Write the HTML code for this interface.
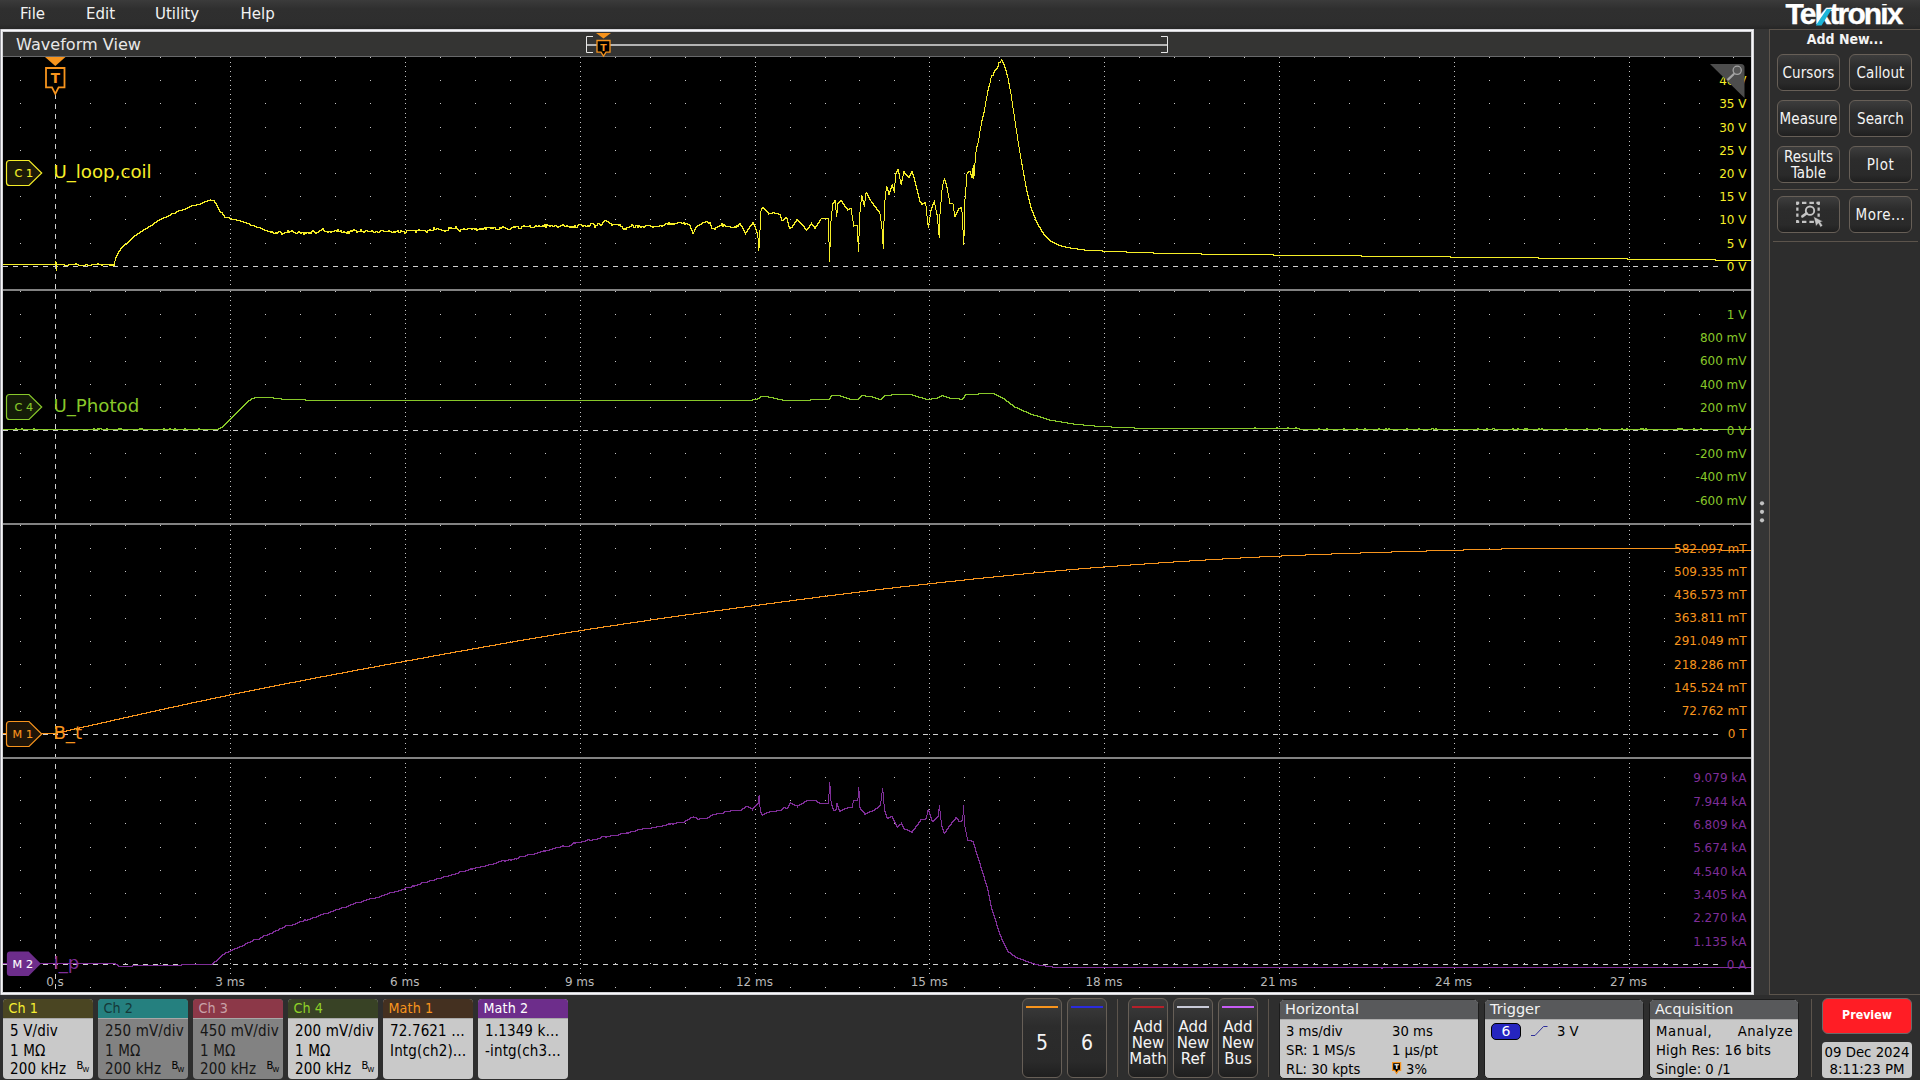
<!DOCTYPE html><html><head><meta charset="utf-8"><title>Waveform View</title><style>
*{box-sizing:border-box;margin:0;padding:0}
html,body{width:1920px;height:1080px;overflow:hidden;background:#2e2e2e;font-family:"DejaVu Sans","Liberation Sans",sans-serif;color:#fff}
#root{position:absolute;left:0;top:0;width:1920px;height:1080px;background:#2e2e2e;overflow:hidden}
.abs{position:absolute}
#menubar{position:absolute;left:0;top:0;width:1920px;height:29px;background:linear-gradient(#3b3b3b 0px,#2f2f2f 9px,#2e2e2e 24px,#262626 29px)}
#menubar span{position:absolute;top:5px;font-size:15px;line-height:18px;color:#f2f2f2;white-space:nowrap}
#frame{position:absolute;left:0;top:29px;width:1754px;height:966px;background:#f7f7f9;box-shadow:inset 0 0 0 1px #d6d6da}
#frame .in{position:absolute;left:3px;top:3px;width:1748px;height:960px;background:#000;box-shadow:0 0 0 1px #d2d2d6}
#frameshade{position:absolute;left:0;top:29px;width:1px;height:966px;background:#9a9aa0}
#wvhead{position:absolute;left:3px;top:32px;width:1748px;height:24px;background:#343433}
#wvhead .t{position:absolute;left:13px;top:3px;font-size:16.1px;line-height:20px;color:#e8e8e8;white-space:nowrap}
#wvline{position:absolute;left:3px;top:56px;width:1748px;height:1px;background:#68696b}
svg{position:absolute;left:0;top:0;overflow:visible}
.lab{position:absolute;right:173.5px;height:15px;line-height:15px;font-size:12px;background:#000;padding:0 0 0 3px;white-space:nowrap;text-align:right}
.tlab{position:absolute;font-size:12px;line-height:13px;color:#b9b9b9;white-space:nowrap;transform:translateX(-50%);top:975.5px;background:#000;padding:0 2px}
.wname{position:absolute;left:53.4px;font-size:18.2px;line-height:22px;white-space:nowrap}
#split{position:absolute;left:1754px;top:29px;width:15px;height:966px;background:#353535}
#side{position:absolute;left:1769px;top:29px;width:152px;height:966px;border:1px solid #5c544c;background:#2d2d2d}
#side .ttl{position:absolute;left:0;top:0px;width:150px;text-align:center;font-family:'DejaVu Sans Condensed','DejaVu Sans',sans-serif;font-weight:bold;font-size:14px;line-height:18px;color:#f4f4f4}
.btn{position:absolute;border:1px solid #675f57;border-radius:6px;background:linear-gradient(#3d3d3d 0%,#2c2c2c 35%,#2a2a2a 80%,#1f1f1f 100%);color:#f4f4f4;text-align:center;font-size:14px;white-space:nowrap}
.sbtn{width:63px;height:37px;line-height:36px;font-family:'DejaVu Sans Condensed','DejaVu Sans',sans-serif;font-size:15px;letter-spacing:0.08px}
.hr{position:absolute;height:1px;background:#5c544c}
.vr{position:absolute;width:1px;background:#5c544c}
.badge{position:absolute;top:999px;width:90px;height:80px;border-radius:4px;overflow:hidden;background:#c9c9c9;color:#000;font-size:14px}
.badge .h{position:absolute;left:0;top:-0.5px;width:100%;height:19.5px;font-family:'DejaVu Sans Condensed','DejaVu Sans',sans-serif;font-size:14.2px;letter-spacing:0.1px;line-height:19px;padding-left:5.5px;white-space:nowrap}
.badge .hl{position:absolute;left:0;top:19px;width:100%;height:1px;background:#a8a8a8}
.badge .r{position:absolute;left:7px;white-space:nowrap;line-height:18px;font-family:'DejaVu Sans Condensed','DejaVu Sans',sans-serif;font-size:15px;letter-spacing:0.15px}
.badge.off{background:#828282;color:#161616}
.bw{position:absolute;left:73.5px;top:61px;font-size:10px;line-height:11px;color:#000}
.bw i{font-style:normal;font-size:6.8px;position:relative;top:3.2px;left:-0.8px}
.ibox{position:absolute;top:999px;height:80px;border:1px solid #1c1c1c;border-radius:5px;overflow:hidden;background:#c9c9c9;color:#000;font-size:14px}
.ibox .h{position:absolute;left:0;top:0;width:100%;height:19px;background:#58595b;color:#f2f2f2;font-size:14.5px;line-height:18px;padding-left:5px;white-space:nowrap}
.ibox .hl{position:absolute;left:0;top:19px;width:100%;height:1px;background:#adadad}
.ibox .r{position:absolute;white-space:nowrap;line-height:18px;font-family:'DejaVu Sans Condensed','DejaVu Sans',sans-serif;font-size:14.7px}
.tbtn{top:998px;width:40px;height:80px;border-radius:6px}
.tbtn .bar{position:absolute;left:3px;top:7px;width:32px;height:2px}
.tbtn .tx{position:absolute;left:-4px;width:46px;top:20px;font-size:15px;line-height:16px;text-align:center}
.tbtn .num{position:absolute;left:0;width:38px;top:31.6px;font-family:'DejaVu Sans Condensed','DejaVu Sans',sans-serif;font-size:21px;line-height:24px;text-align:center}
</style></head><body><div id="root">
<div id="menubar"><span style="left:20px">File</span><span style="left:86px">Edit</span><span style="left:155px">Utility</span><span style="left:240.5px">Help</span></div>
<div id="frame"><div class="in"></div></div><div id="frameshade"></div>
<div id="wvhead"><div class="t">Waveform View</div></div><div id="wvline"></div>
<svg width="1920" height="1080" viewBox="0 0 1920 1080">
<defs><clipPath id="cp"><rect x="3" y="57" width="1748" height="935"/></clipPath></defs>
<g clip-path="url(#cp)">
<path d="M20 57.5h1m69 0h1m34 0h1m34 0h1m34 0h1m34 0h1m34 0h1m34 0h1m34 0h1m34 0h1m34 0h1m34 0h1m34 0h1m34 0h1m34 0h1m34 0h1m34 0h1m34 0h1m34 0h1m34 0h1m34 0h1m34 0h1m34 0h1m33 0h1m34 0h1m34 0h1m34 0h1m34 0h1m34 0h1m34 0h1m34 0h1m34 0h1m34 0h1m34 0h1m34 0h1m34 0h1m34 0h1m34 0h1m34 0h1m34 0h1m34 0h1m34 0h1m34 0h1m34 0h1m34 0h1m34 0h1m34 0h1m34 0h1m33 0h1M20 80.5h1m69 0h1m34 0h1m34 0h1m34 0h1m34 0h1m34 0h1m34 0h1m34 0h1m34 0h1m34 0h1m34 0h1m34 0h1m34 0h1m34 0h1m34 0h1m34 0h1m34 0h1m34 0h1m34 0h1m34 0h1m34 0h1m34 0h1m33 0h1m34 0h1m34 0h1m34 0h1m34 0h1m34 0h1m34 0h1m34 0h1m34 0h1m34 0h1m34 0h1m34 0h1m34 0h1m34 0h1m34 0h1m34 0h1m34 0h1m34 0h1m34 0h1m34 0h1m34 0h1m34 0h1m34 0h1m34 0h1m34 0h1m33 0h1M20 103.5h1m69 0h1m34 0h1m34 0h1m34 0h1m34 0h1m34 0h1m34 0h1m34 0h1m34 0h1m34 0h1m34 0h1m34 0h1m34 0h1m34 0h1m34 0h1m34 0h1m34 0h1m34 0h1m34 0h1m34 0h1m34 0h1m34 0h1m33 0h1m34 0h1m34 0h1m34 0h1m34 0h1m34 0h1m34 0h1m34 0h1m34 0h1m34 0h1m34 0h1m34 0h1m34 0h1m34 0h1m34 0h1m34 0h1m34 0h1m34 0h1m34 0h1m34 0h1m34 0h1m34 0h1m34 0h1m34 0h1m34 0h1m33 0h1M20 127.5h1m69 0h1m34 0h1m34 0h1m34 0h1m34 0h1m34 0h1m34 0h1m34 0h1m34 0h1m34 0h1m34 0h1m34 0h1m34 0h1m34 0h1m34 0h1m34 0h1m34 0h1m34 0h1m34 0h1m34 0h1m34 0h1m34 0h1m33 0h1m34 0h1m34 0h1m34 0h1m34 0h1m34 0h1m34 0h1m34 0h1m34 0h1m34 0h1m34 0h1m34 0h1m34 0h1m34 0h1m34 0h1m34 0h1m34 0h1m34 0h1m34 0h1m34 0h1m34 0h1m34 0h1m34 0h1m34 0h1m34 0h1m33 0h1M20 150.5h1m69 0h1m34 0h1m34 0h1m34 0h1m34 0h1m34 0h1m34 0h1m34 0h1m34 0h1m34 0h1m34 0h1m34 0h1m34 0h1m34 0h1m34 0h1m34 0h1m34 0h1m34 0h1m34 0h1m34 0h1m34 0h1m34 0h1m33 0h1m34 0h1m34 0h1m34 0h1m34 0h1m34 0h1m34 0h1m34 0h1m34 0h1m34 0h1m34 0h1m34 0h1m34 0h1m34 0h1m34 0h1m34 0h1m34 0h1m34 0h1m34 0h1m34 0h1m34 0h1m34 0h1m34 0h1m34 0h1m34 0h1m33 0h1M20 173.5h1m69 0h1m34 0h1m34 0h1m34 0h1m34 0h1m34 0h1m34 0h1m34 0h1m34 0h1m34 0h1m34 0h1m34 0h1m34 0h1m34 0h1m34 0h1m34 0h1m34 0h1m34 0h1m34 0h1m34 0h1m34 0h1m34 0h1m33 0h1m34 0h1m34 0h1m34 0h1m34 0h1m34 0h1m34 0h1m34 0h1m34 0h1m34 0h1m34 0h1m34 0h1m34 0h1m34 0h1m34 0h1m34 0h1m34 0h1m34 0h1m34 0h1m34 0h1m34 0h1m34 0h1m34 0h1m34 0h1m34 0h1m33 0h1M20 196.5h1m69 0h1m34 0h1m34 0h1m34 0h1m34 0h1m34 0h1m34 0h1m34 0h1m34 0h1m34 0h1m34 0h1m34 0h1m34 0h1m34 0h1m34 0h1m34 0h1m34 0h1m34 0h1m34 0h1m34 0h1m34 0h1m34 0h1m33 0h1m34 0h1m34 0h1m34 0h1m34 0h1m34 0h1m34 0h1m34 0h1m34 0h1m34 0h1m34 0h1m34 0h1m34 0h1m34 0h1m34 0h1m34 0h1m34 0h1m34 0h1m34 0h1m34 0h1m34 0h1m34 0h1m34 0h1m34 0h1m34 0h1m33 0h1M20 219.5h1m69 0h1m34 0h1m34 0h1m34 0h1m34 0h1m34 0h1m34 0h1m34 0h1m34 0h1m34 0h1m34 0h1m34 0h1m34 0h1m34 0h1m34 0h1m34 0h1m34 0h1m34 0h1m34 0h1m34 0h1m34 0h1m34 0h1m33 0h1m34 0h1m34 0h1m34 0h1m34 0h1m34 0h1m34 0h1m34 0h1m34 0h1m34 0h1m34 0h1m34 0h1m34 0h1m34 0h1m34 0h1m34 0h1m34 0h1m34 0h1m34 0h1m34 0h1m34 0h1m34 0h1m34 0h1m34 0h1m34 0h1m33 0h1M20 243.5h1m69 0h1m34 0h1m34 0h1m34 0h1m34 0h1m34 0h1m34 0h1m34 0h1m34 0h1m34 0h1m34 0h1m34 0h1m34 0h1m34 0h1m34 0h1m34 0h1m34 0h1m34 0h1m34 0h1m34 0h1m34 0h1m34 0h1m33 0h1m34 0h1m34 0h1m34 0h1m34 0h1m34 0h1m34 0h1m34 0h1m34 0h1m34 0h1m34 0h1m34 0h1m34 0h1m34 0h1m34 0h1m34 0h1m34 0h1m34 0h1m34 0h1m34 0h1m34 0h1m34 0h1m34 0h1m34 0h1m34 0h1m33 0h1M230 57.5h1m-1 5h1m-1 4h1m-1 5h1m-1 5h1m-1 4h1m-1 5h1m-1 4h1m-1 5h1m-1 5h1m-1 4h1m-1 5h1m-1 5h1m-1 4h1m-1 5h1m-1 5h1m-1 4h1m-1 5h1m-1 5h1m-1 4h1m-1 5h1m-1 4h1m-1 5h1m-1 5h1m-1 4h1m-1 5h1m-1 5h1m-1 4h1m-1 5h1m-1 5h1m-1 4h1m-1 5h1m-1 4h1m-1 5h1m-1 5h1m-1 4h1m-1 5h1m-1 5h1m-1 4h1m-1 5h1m-1 5h1m-1 4h1m-1 5h1m-1 5h1m-1 4h1m-1 5h1m-1 4h1m-1 5h1m-1 5h1m-1 4h1M405 57.5h1m-1 5h1m-1 4h1m-1 5h1m-1 5h1m-1 4h1m-1 5h1m-1 4h1m-1 5h1m-1 5h1m-1 4h1m-1 5h1m-1 5h1m-1 4h1m-1 5h1m-1 5h1m-1 4h1m-1 5h1m-1 5h1m-1 4h1m-1 5h1m-1 4h1m-1 5h1m-1 5h1m-1 4h1m-1 5h1m-1 5h1m-1 4h1m-1 5h1m-1 5h1m-1 4h1m-1 5h1m-1 4h1m-1 5h1m-1 5h1m-1 4h1m-1 5h1m-1 5h1m-1 4h1m-1 5h1m-1 5h1m-1 4h1m-1 5h1m-1 5h1m-1 4h1m-1 5h1m-1 4h1m-1 5h1m-1 5h1m-1 4h1M580 57.5h1m-1 5h1m-1 4h1m-1 5h1m-1 5h1m-1 4h1m-1 5h1m-1 4h1m-1 5h1m-1 5h1m-1 4h1m-1 5h1m-1 5h1m-1 4h1m-1 5h1m-1 5h1m-1 4h1m-1 5h1m-1 5h1m-1 4h1m-1 5h1m-1 4h1m-1 5h1m-1 5h1m-1 4h1m-1 5h1m-1 5h1m-1 4h1m-1 5h1m-1 5h1m-1 4h1m-1 5h1m-1 4h1m-1 5h1m-1 5h1m-1 4h1m-1 5h1m-1 5h1m-1 4h1m-1 5h1m-1 5h1m-1 4h1m-1 5h1m-1 5h1m-1 4h1m-1 5h1m-1 4h1m-1 5h1m-1 5h1m-1 4h1M755 57.5h1m-1 5h1m-1 4h1m-1 5h1m-1 5h1m-1 4h1m-1 5h1m-1 4h1m-1 5h1m-1 5h1m-1 4h1m-1 5h1m-1 5h1m-1 4h1m-1 5h1m-1 5h1m-1 4h1m-1 5h1m-1 5h1m-1 4h1m-1 5h1m-1 4h1m-1 5h1m-1 5h1m-1 4h1m-1 5h1m-1 5h1m-1 4h1m-1 5h1m-1 5h1m-1 4h1m-1 5h1m-1 4h1m-1 5h1m-1 5h1m-1 4h1m-1 5h1m-1 5h1m-1 4h1m-1 5h1m-1 5h1m-1 4h1m-1 5h1m-1 5h1m-1 4h1m-1 5h1m-1 4h1m-1 5h1m-1 5h1m-1 4h1M929 57.5h1m-1 5h1m-1 4h1m-1 5h1m-1 5h1m-1 4h1m-1 5h1m-1 4h1m-1 5h1m-1 5h1m-1 4h1m-1 5h1m-1 5h1m-1 4h1m-1 5h1m-1 5h1m-1 4h1m-1 5h1m-1 5h1m-1 4h1m-1 5h1m-1 4h1m-1 5h1m-1 5h1m-1 4h1m-1 5h1m-1 5h1m-1 4h1m-1 5h1m-1 5h1m-1 4h1m-1 5h1m-1 4h1m-1 5h1m-1 5h1m-1 4h1m-1 5h1m-1 5h1m-1 4h1m-1 5h1m-1 5h1m-1 4h1m-1 5h1m-1 5h1m-1 4h1m-1 5h1m-1 4h1m-1 5h1m-1 5h1m-1 4h1M1104 57.5h1m-1 5h1m-1 4h1m-1 5h1m-1 5h1m-1 4h1m-1 5h1m-1 4h1m-1 5h1m-1 5h1m-1 4h1m-1 5h1m-1 5h1m-1 4h1m-1 5h1m-1 5h1m-1 4h1m-1 5h1m-1 5h1m-1 4h1m-1 5h1m-1 4h1m-1 5h1m-1 5h1m-1 4h1m-1 5h1m-1 5h1m-1 4h1m-1 5h1m-1 5h1m-1 4h1m-1 5h1m-1 4h1m-1 5h1m-1 5h1m-1 4h1m-1 5h1m-1 5h1m-1 4h1m-1 5h1m-1 5h1m-1 4h1m-1 5h1m-1 5h1m-1 4h1m-1 5h1m-1 4h1m-1 5h1m-1 5h1m-1 4h1M1279 57.5h1m-1 5h1m-1 4h1m-1 5h1m-1 5h1m-1 4h1m-1 5h1m-1 4h1m-1 5h1m-1 5h1m-1 4h1m-1 5h1m-1 5h1m-1 4h1m-1 5h1m-1 5h1m-1 4h1m-1 5h1m-1 5h1m-1 4h1m-1 5h1m-1 4h1m-1 5h1m-1 5h1m-1 4h1m-1 5h1m-1 5h1m-1 4h1m-1 5h1m-1 5h1m-1 4h1m-1 5h1m-1 4h1m-1 5h1m-1 5h1m-1 4h1m-1 5h1m-1 5h1m-1 4h1m-1 5h1m-1 5h1m-1 4h1m-1 5h1m-1 5h1m-1 4h1m-1 5h1m-1 4h1m-1 5h1m-1 5h1m-1 4h1M1454 57.5h1m-1 5h1m-1 4h1m-1 5h1m-1 5h1m-1 4h1m-1 5h1m-1 4h1m-1 5h1m-1 5h1m-1 4h1m-1 5h1m-1 5h1m-1 4h1m-1 5h1m-1 5h1m-1 4h1m-1 5h1m-1 5h1m-1 4h1m-1 5h1m-1 4h1m-1 5h1m-1 5h1m-1 4h1m-1 5h1m-1 5h1m-1 4h1m-1 5h1m-1 5h1m-1 4h1m-1 5h1m-1 4h1m-1 5h1m-1 5h1m-1 4h1m-1 5h1m-1 5h1m-1 4h1m-1 5h1m-1 5h1m-1 4h1m-1 5h1m-1 5h1m-1 4h1m-1 5h1m-1 4h1m-1 5h1m-1 5h1m-1 4h1M1629 57.5h1m-1 5h1m-1 4h1m-1 5h1m-1 5h1m-1 4h1m-1 5h1m-1 4h1m-1 5h1m-1 5h1m-1 4h1m-1 5h1m-1 5h1m-1 4h1m-1 5h1m-1 5h1m-1 4h1m-1 5h1m-1 5h1m-1 4h1m-1 5h1m-1 4h1m-1 5h1m-1 5h1m-1 4h1m-1 5h1m-1 5h1m-1 4h1m-1 5h1m-1 5h1m-1 4h1m-1 5h1m-1 4h1m-1 5h1m-1 5h1m-1 4h1m-1 5h1m-1 5h1m-1 4h1m-1 5h1m-1 5h1m-1 4h1m-1 5h1m-1 5h1m-1 4h1m-1 5h1m-1 4h1m-1 5h1m-1 5h1m-1 4h1M20 291.5h1m69 0h1m34 0h1m34 0h1m34 0h1m34 0h1m34 0h1m34 0h1m34 0h1m34 0h1m34 0h1m34 0h1m34 0h1m34 0h1m34 0h1m34 0h1m34 0h1m34 0h1m34 0h1m34 0h1m34 0h1m34 0h1m34 0h1m33 0h1m34 0h1m34 0h1m34 0h1m34 0h1m34 0h1m34 0h1m34 0h1m34 0h1m34 0h1m34 0h1m34 0h1m34 0h1m34 0h1m34 0h1m34 0h1m34 0h1m34 0h1m34 0h1m34 0h1m34 0h1m34 0h1m34 0h1m34 0h1m34 0h1m33 0h1M20 314.5h1m69 0h1m34 0h1m34 0h1m34 0h1m34 0h1m34 0h1m34 0h1m34 0h1m34 0h1m34 0h1m34 0h1m34 0h1m34 0h1m34 0h1m34 0h1m34 0h1m34 0h1m34 0h1m34 0h1m34 0h1m34 0h1m34 0h1m33 0h1m34 0h1m34 0h1m34 0h1m34 0h1m34 0h1m34 0h1m34 0h1m34 0h1m34 0h1m34 0h1m34 0h1m34 0h1m34 0h1m34 0h1m34 0h1m34 0h1m34 0h1m34 0h1m34 0h1m34 0h1m34 0h1m34 0h1m34 0h1m34 0h1m33 0h1M20 337.5h1m69 0h1m34 0h1m34 0h1m34 0h1m34 0h1m34 0h1m34 0h1m34 0h1m34 0h1m34 0h1m34 0h1m34 0h1m34 0h1m34 0h1m34 0h1m34 0h1m34 0h1m34 0h1m34 0h1m34 0h1m34 0h1m34 0h1m33 0h1m34 0h1m34 0h1m34 0h1m34 0h1m34 0h1m34 0h1m34 0h1m34 0h1m34 0h1m34 0h1m34 0h1m34 0h1m34 0h1m34 0h1m34 0h1m34 0h1m34 0h1m34 0h1m34 0h1m34 0h1m34 0h1m34 0h1m34 0h1m34 0h1m33 0h1M20 361.5h1m69 0h1m34 0h1m34 0h1m34 0h1m34 0h1m34 0h1m34 0h1m34 0h1m34 0h1m34 0h1m34 0h1m34 0h1m34 0h1m34 0h1m34 0h1m34 0h1m34 0h1m34 0h1m34 0h1m34 0h1m34 0h1m34 0h1m33 0h1m34 0h1m34 0h1m34 0h1m34 0h1m34 0h1m34 0h1m34 0h1m34 0h1m34 0h1m34 0h1m34 0h1m34 0h1m34 0h1m34 0h1m34 0h1m34 0h1m34 0h1m34 0h1m34 0h1m34 0h1m34 0h1m34 0h1m34 0h1m34 0h1m33 0h1M20 384.5h1m69 0h1m34 0h1m34 0h1m34 0h1m34 0h1m34 0h1m34 0h1m34 0h1m34 0h1m34 0h1m34 0h1m34 0h1m34 0h1m34 0h1m34 0h1m34 0h1m34 0h1m34 0h1m34 0h1m34 0h1m34 0h1m34 0h1m33 0h1m34 0h1m34 0h1m34 0h1m34 0h1m34 0h1m34 0h1m34 0h1m34 0h1m34 0h1m34 0h1m34 0h1m34 0h1m34 0h1m34 0h1m34 0h1m34 0h1m34 0h1m34 0h1m34 0h1m34 0h1m34 0h1m34 0h1m34 0h1m34 0h1m33 0h1M20 407.5h1m69 0h1m34 0h1m34 0h1m34 0h1m34 0h1m34 0h1m34 0h1m34 0h1m34 0h1m34 0h1m34 0h1m34 0h1m34 0h1m34 0h1m34 0h1m34 0h1m34 0h1m34 0h1m34 0h1m34 0h1m34 0h1m34 0h1m33 0h1m34 0h1m34 0h1m34 0h1m34 0h1m34 0h1m34 0h1m34 0h1m34 0h1m34 0h1m34 0h1m34 0h1m34 0h1m34 0h1m34 0h1m34 0h1m34 0h1m34 0h1m34 0h1m34 0h1m34 0h1m34 0h1m34 0h1m34 0h1m34 0h1m33 0h1M20 453.5h1m69 0h1m34 0h1m34 0h1m34 0h1m34 0h1m34 0h1m34 0h1m34 0h1m34 0h1m34 0h1m34 0h1m34 0h1m34 0h1m34 0h1m34 0h1m34 0h1m34 0h1m34 0h1m34 0h1m34 0h1m34 0h1m34 0h1m33 0h1m34 0h1m34 0h1m34 0h1m34 0h1m34 0h1m34 0h1m34 0h1m34 0h1m34 0h1m34 0h1m34 0h1m34 0h1m34 0h1m34 0h1m34 0h1m34 0h1m34 0h1m34 0h1m34 0h1m34 0h1m34 0h1m34 0h1m34 0h1m34 0h1m33 0h1M20 477.5h1m69 0h1m34 0h1m34 0h1m34 0h1m34 0h1m34 0h1m34 0h1m34 0h1m34 0h1m34 0h1m34 0h1m34 0h1m34 0h1m34 0h1m34 0h1m34 0h1m34 0h1m34 0h1m34 0h1m34 0h1m34 0h1m34 0h1m33 0h1m34 0h1m34 0h1m34 0h1m34 0h1m34 0h1m34 0h1m34 0h1m34 0h1m34 0h1m34 0h1m34 0h1m34 0h1m34 0h1m34 0h1m34 0h1m34 0h1m34 0h1m34 0h1m34 0h1m34 0h1m34 0h1m34 0h1m34 0h1m34 0h1m33 0h1M20 500.5h1m69 0h1m34 0h1m34 0h1m34 0h1m34 0h1m34 0h1m34 0h1m34 0h1m34 0h1m34 0h1m34 0h1m34 0h1m34 0h1m34 0h1m34 0h1m34 0h1m34 0h1m34 0h1m34 0h1m34 0h1m34 0h1m34 0h1m33 0h1m34 0h1m34 0h1m34 0h1m34 0h1m34 0h1m34 0h1m34 0h1m34 0h1m34 0h1m34 0h1m34 0h1m34 0h1m34 0h1m34 0h1m34 0h1m34 0h1m34 0h1m34 0h1m34 0h1m34 0h1m34 0h1m34 0h1m34 0h1m34 0h1m33 0h1M230 291.5h1m-1 5h1m-1 4h1m-1 5h1m-1 5h1m-1 4h1m-1 5h1m-1 4h1m-1 5h1m-1 5h1m-1 4h1m-1 5h1m-1 5h1m-1 4h1m-1 5h1m-1 5h1m-1 4h1m-1 5h1m-1 5h1m-1 4h1m-1 5h1m-1 4h1m-1 5h1m-1 5h1m-1 4h1m-1 5h1m-1 5h1m-1 4h1m-1 5h1m-1 5h1m-1 4h1m-1 5h1m-1 4h1m-1 5h1m-1 5h1m-1 4h1m-1 5h1m-1 5h1m-1 4h1m-1 5h1m-1 5h1m-1 4h1m-1 5h1m-1 5h1m-1 4h1m-1 5h1m-1 4h1m-1 5h1m-1 5h1m-1 4h1M405 291.5h1m-1 5h1m-1 4h1m-1 5h1m-1 5h1m-1 4h1m-1 5h1m-1 4h1m-1 5h1m-1 5h1m-1 4h1m-1 5h1m-1 5h1m-1 4h1m-1 5h1m-1 5h1m-1 4h1m-1 5h1m-1 5h1m-1 4h1m-1 5h1m-1 4h1m-1 5h1m-1 5h1m-1 4h1m-1 5h1m-1 5h1m-1 4h1m-1 5h1m-1 5h1m-1 4h1m-1 5h1m-1 4h1m-1 5h1m-1 5h1m-1 4h1m-1 5h1m-1 5h1m-1 4h1m-1 5h1m-1 5h1m-1 4h1m-1 5h1m-1 5h1m-1 4h1m-1 5h1m-1 4h1m-1 5h1m-1 5h1m-1 4h1M580 291.5h1m-1 5h1m-1 4h1m-1 5h1m-1 5h1m-1 4h1m-1 5h1m-1 4h1m-1 5h1m-1 5h1m-1 4h1m-1 5h1m-1 5h1m-1 4h1m-1 5h1m-1 5h1m-1 4h1m-1 5h1m-1 5h1m-1 4h1m-1 5h1m-1 4h1m-1 5h1m-1 5h1m-1 4h1m-1 5h1m-1 5h1m-1 4h1m-1 5h1m-1 5h1m-1 4h1m-1 5h1m-1 4h1m-1 5h1m-1 5h1m-1 4h1m-1 5h1m-1 5h1m-1 4h1m-1 5h1m-1 5h1m-1 4h1m-1 5h1m-1 5h1m-1 4h1m-1 5h1m-1 4h1m-1 5h1m-1 5h1m-1 4h1M755 291.5h1m-1 5h1m-1 4h1m-1 5h1m-1 5h1m-1 4h1m-1 5h1m-1 4h1m-1 5h1m-1 5h1m-1 4h1m-1 5h1m-1 5h1m-1 4h1m-1 5h1m-1 5h1m-1 4h1m-1 5h1m-1 5h1m-1 4h1m-1 5h1m-1 4h1m-1 5h1m-1 5h1m-1 4h1m-1 5h1m-1 5h1m-1 4h1m-1 5h1m-1 5h1m-1 4h1m-1 5h1m-1 4h1m-1 5h1m-1 5h1m-1 4h1m-1 5h1m-1 5h1m-1 4h1m-1 5h1m-1 5h1m-1 4h1m-1 5h1m-1 5h1m-1 4h1m-1 5h1m-1 4h1m-1 5h1m-1 5h1m-1 4h1M929 291.5h1m-1 5h1m-1 4h1m-1 5h1m-1 5h1m-1 4h1m-1 5h1m-1 4h1m-1 5h1m-1 5h1m-1 4h1m-1 5h1m-1 5h1m-1 4h1m-1 5h1m-1 5h1m-1 4h1m-1 5h1m-1 5h1m-1 4h1m-1 5h1m-1 4h1m-1 5h1m-1 5h1m-1 4h1m-1 5h1m-1 5h1m-1 4h1m-1 5h1m-1 5h1m-1 4h1m-1 5h1m-1 4h1m-1 5h1m-1 5h1m-1 4h1m-1 5h1m-1 5h1m-1 4h1m-1 5h1m-1 5h1m-1 4h1m-1 5h1m-1 5h1m-1 4h1m-1 5h1m-1 4h1m-1 5h1m-1 5h1m-1 4h1M1104 291.5h1m-1 5h1m-1 4h1m-1 5h1m-1 5h1m-1 4h1m-1 5h1m-1 4h1m-1 5h1m-1 5h1m-1 4h1m-1 5h1m-1 5h1m-1 4h1m-1 5h1m-1 5h1m-1 4h1m-1 5h1m-1 5h1m-1 4h1m-1 5h1m-1 4h1m-1 5h1m-1 5h1m-1 4h1m-1 5h1m-1 5h1m-1 4h1m-1 5h1m-1 5h1m-1 4h1m-1 5h1m-1 4h1m-1 5h1m-1 5h1m-1 4h1m-1 5h1m-1 5h1m-1 4h1m-1 5h1m-1 5h1m-1 4h1m-1 5h1m-1 5h1m-1 4h1m-1 5h1m-1 4h1m-1 5h1m-1 5h1m-1 4h1M1279 291.5h1m-1 5h1m-1 4h1m-1 5h1m-1 5h1m-1 4h1m-1 5h1m-1 4h1m-1 5h1m-1 5h1m-1 4h1m-1 5h1m-1 5h1m-1 4h1m-1 5h1m-1 5h1m-1 4h1m-1 5h1m-1 5h1m-1 4h1m-1 5h1m-1 4h1m-1 5h1m-1 5h1m-1 4h1m-1 5h1m-1 5h1m-1 4h1m-1 5h1m-1 5h1m-1 4h1m-1 5h1m-1 4h1m-1 5h1m-1 5h1m-1 4h1m-1 5h1m-1 5h1m-1 4h1m-1 5h1m-1 5h1m-1 4h1m-1 5h1m-1 5h1m-1 4h1m-1 5h1m-1 4h1m-1 5h1m-1 5h1m-1 4h1M1454 291.5h1m-1 5h1m-1 4h1m-1 5h1m-1 5h1m-1 4h1m-1 5h1m-1 4h1m-1 5h1m-1 5h1m-1 4h1m-1 5h1m-1 5h1m-1 4h1m-1 5h1m-1 5h1m-1 4h1m-1 5h1m-1 5h1m-1 4h1m-1 5h1m-1 4h1m-1 5h1m-1 5h1m-1 4h1m-1 5h1m-1 5h1m-1 4h1m-1 5h1m-1 5h1m-1 4h1m-1 5h1m-1 4h1m-1 5h1m-1 5h1m-1 4h1m-1 5h1m-1 5h1m-1 4h1m-1 5h1m-1 5h1m-1 4h1m-1 5h1m-1 5h1m-1 4h1m-1 5h1m-1 4h1m-1 5h1m-1 5h1m-1 4h1M1629 291.5h1m-1 5h1m-1 4h1m-1 5h1m-1 5h1m-1 4h1m-1 5h1m-1 4h1m-1 5h1m-1 5h1m-1 4h1m-1 5h1m-1 5h1m-1 4h1m-1 5h1m-1 5h1m-1 4h1m-1 5h1m-1 5h1m-1 4h1m-1 5h1m-1 4h1m-1 5h1m-1 5h1m-1 4h1m-1 5h1m-1 5h1m-1 4h1m-1 5h1m-1 5h1m-1 4h1m-1 5h1m-1 4h1m-1 5h1m-1 5h1m-1 4h1m-1 5h1m-1 5h1m-1 4h1m-1 5h1m-1 5h1m-1 4h1m-1 5h1m-1 5h1m-1 4h1m-1 5h1m-1 4h1m-1 5h1m-1 5h1m-1 4h1M20 525.5h1m69 0h1m34 0h1m34 0h1m34 0h1m34 0h1m34 0h1m34 0h1m34 0h1m34 0h1m34 0h1m34 0h1m34 0h1m34 0h1m34 0h1m34 0h1m34 0h1m34 0h1m34 0h1m34 0h1m34 0h1m34 0h1m34 0h1m33 0h1m34 0h1m34 0h1m34 0h1m34 0h1m34 0h1m34 0h1m34 0h1m34 0h1m34 0h1m34 0h1m34 0h1m34 0h1m34 0h1m34 0h1m34 0h1m34 0h1m34 0h1m34 0h1m34 0h1m34 0h1m34 0h1m34 0h1m34 0h1m34 0h1m33 0h1M20 548.5h1m69 0h1m34 0h1m34 0h1m34 0h1m34 0h1m34 0h1m34 0h1m34 0h1m34 0h1m34 0h1m34 0h1m34 0h1m34 0h1m34 0h1m34 0h1m34 0h1m34 0h1m34 0h1m34 0h1m34 0h1m34 0h1m34 0h1m33 0h1m34 0h1m34 0h1m34 0h1m34 0h1m34 0h1m34 0h1m34 0h1m34 0h1m34 0h1m34 0h1m34 0h1m34 0h1m34 0h1m34 0h1m34 0h1m34 0h1m34 0h1m34 0h1m34 0h1m34 0h1m34 0h1m34 0h1m34 0h1m34 0h1m33 0h1M20 571.5h1m69 0h1m34 0h1m34 0h1m34 0h1m34 0h1m34 0h1m34 0h1m34 0h1m34 0h1m34 0h1m34 0h1m34 0h1m34 0h1m34 0h1m34 0h1m34 0h1m34 0h1m34 0h1m34 0h1m34 0h1m34 0h1m34 0h1m33 0h1m34 0h1m34 0h1m34 0h1m34 0h1m34 0h1m34 0h1m34 0h1m34 0h1m34 0h1m34 0h1m34 0h1m34 0h1m34 0h1m34 0h1m34 0h1m34 0h1m34 0h1m34 0h1m34 0h1m34 0h1m34 0h1m34 0h1m34 0h1m34 0h1m33 0h1M20 595.5h1m69 0h1m34 0h1m34 0h1m34 0h1m34 0h1m34 0h1m34 0h1m34 0h1m34 0h1m34 0h1m34 0h1m34 0h1m34 0h1m34 0h1m34 0h1m34 0h1m34 0h1m34 0h1m34 0h1m34 0h1m34 0h1m34 0h1m33 0h1m34 0h1m34 0h1m34 0h1m34 0h1m34 0h1m34 0h1m34 0h1m34 0h1m34 0h1m34 0h1m34 0h1m34 0h1m34 0h1m34 0h1m34 0h1m34 0h1m34 0h1m34 0h1m34 0h1m34 0h1m34 0h1m34 0h1m34 0h1m34 0h1m33 0h1M20 618.5h1m69 0h1m34 0h1m34 0h1m34 0h1m34 0h1m34 0h1m34 0h1m34 0h1m34 0h1m34 0h1m34 0h1m34 0h1m34 0h1m34 0h1m34 0h1m34 0h1m34 0h1m34 0h1m34 0h1m34 0h1m34 0h1m34 0h1m33 0h1m34 0h1m34 0h1m34 0h1m34 0h1m34 0h1m34 0h1m34 0h1m34 0h1m34 0h1m34 0h1m34 0h1m34 0h1m34 0h1m34 0h1m34 0h1m34 0h1m34 0h1m34 0h1m34 0h1m34 0h1m34 0h1m34 0h1m34 0h1m34 0h1m33 0h1M20 641.5h1m69 0h1m34 0h1m34 0h1m34 0h1m34 0h1m34 0h1m34 0h1m34 0h1m34 0h1m34 0h1m34 0h1m34 0h1m34 0h1m34 0h1m34 0h1m34 0h1m34 0h1m34 0h1m34 0h1m34 0h1m34 0h1m34 0h1m33 0h1m34 0h1m34 0h1m34 0h1m34 0h1m34 0h1m34 0h1m34 0h1m34 0h1m34 0h1m34 0h1m34 0h1m34 0h1m34 0h1m34 0h1m34 0h1m34 0h1m34 0h1m34 0h1m34 0h1m34 0h1m34 0h1m34 0h1m34 0h1m34 0h1m33 0h1M20 664.5h1m69 0h1m34 0h1m34 0h1m34 0h1m34 0h1m34 0h1m34 0h1m34 0h1m34 0h1m34 0h1m34 0h1m34 0h1m34 0h1m34 0h1m34 0h1m34 0h1m34 0h1m34 0h1m34 0h1m34 0h1m34 0h1m34 0h1m33 0h1m34 0h1m34 0h1m34 0h1m34 0h1m34 0h1m34 0h1m34 0h1m34 0h1m34 0h1m34 0h1m34 0h1m34 0h1m34 0h1m34 0h1m34 0h1m34 0h1m34 0h1m34 0h1m34 0h1m34 0h1m34 0h1m34 0h1m34 0h1m34 0h1m33 0h1M20 687.5h1m69 0h1m34 0h1m34 0h1m34 0h1m34 0h1m34 0h1m34 0h1m34 0h1m34 0h1m34 0h1m34 0h1m34 0h1m34 0h1m34 0h1m34 0h1m34 0h1m34 0h1m34 0h1m34 0h1m34 0h1m34 0h1m34 0h1m33 0h1m34 0h1m34 0h1m34 0h1m34 0h1m34 0h1m34 0h1m34 0h1m34 0h1m34 0h1m34 0h1m34 0h1m34 0h1m34 0h1m34 0h1m34 0h1m34 0h1m34 0h1m34 0h1m34 0h1m34 0h1m34 0h1m34 0h1m34 0h1m34 0h1m33 0h1M20 711.5h1m69 0h1m34 0h1m34 0h1m34 0h1m34 0h1m34 0h1m34 0h1m34 0h1m34 0h1m34 0h1m34 0h1m34 0h1m34 0h1m34 0h1m34 0h1m34 0h1m34 0h1m34 0h1m34 0h1m34 0h1m34 0h1m34 0h1m33 0h1m34 0h1m34 0h1m34 0h1m34 0h1m34 0h1m34 0h1m34 0h1m34 0h1m34 0h1m34 0h1m34 0h1m34 0h1m34 0h1m34 0h1m34 0h1m34 0h1m34 0h1m34 0h1m34 0h1m34 0h1m34 0h1m34 0h1m34 0h1m34 0h1m33 0h1M230 525.5h1m-1 5h1m-1 4h1m-1 5h1m-1 5h1m-1 4h1m-1 5h1m-1 4h1m-1 5h1m-1 5h1m-1 4h1m-1 5h1m-1 5h1m-1 4h1m-1 5h1m-1 5h1m-1 4h1m-1 5h1m-1 5h1m-1 4h1m-1 5h1m-1 4h1m-1 5h1m-1 5h1m-1 4h1m-1 5h1m-1 5h1m-1 4h1m-1 5h1m-1 5h1m-1 4h1m-1 5h1m-1 4h1m-1 5h1m-1 5h1m-1 4h1m-1 5h1m-1 5h1m-1 4h1m-1 5h1m-1 5h1m-1 4h1m-1 5h1m-1 5h1m-1 4h1m-1 5h1m-1 4h1m-1 5h1m-1 5h1m-1 4h1M405 525.5h1m-1 5h1m-1 4h1m-1 5h1m-1 5h1m-1 4h1m-1 5h1m-1 4h1m-1 5h1m-1 5h1m-1 4h1m-1 5h1m-1 5h1m-1 4h1m-1 5h1m-1 5h1m-1 4h1m-1 5h1m-1 5h1m-1 4h1m-1 5h1m-1 4h1m-1 5h1m-1 5h1m-1 4h1m-1 5h1m-1 5h1m-1 4h1m-1 5h1m-1 5h1m-1 4h1m-1 5h1m-1 4h1m-1 5h1m-1 5h1m-1 4h1m-1 5h1m-1 5h1m-1 4h1m-1 5h1m-1 5h1m-1 4h1m-1 5h1m-1 5h1m-1 4h1m-1 5h1m-1 4h1m-1 5h1m-1 5h1m-1 4h1M580 525.5h1m-1 5h1m-1 4h1m-1 5h1m-1 5h1m-1 4h1m-1 5h1m-1 4h1m-1 5h1m-1 5h1m-1 4h1m-1 5h1m-1 5h1m-1 4h1m-1 5h1m-1 5h1m-1 4h1m-1 5h1m-1 5h1m-1 4h1m-1 5h1m-1 4h1m-1 5h1m-1 5h1m-1 4h1m-1 5h1m-1 5h1m-1 4h1m-1 5h1m-1 5h1m-1 4h1m-1 5h1m-1 4h1m-1 5h1m-1 5h1m-1 4h1m-1 5h1m-1 5h1m-1 4h1m-1 5h1m-1 5h1m-1 4h1m-1 5h1m-1 5h1m-1 4h1m-1 5h1m-1 4h1m-1 5h1m-1 5h1m-1 4h1M755 525.5h1m-1 5h1m-1 4h1m-1 5h1m-1 5h1m-1 4h1m-1 5h1m-1 4h1m-1 5h1m-1 5h1m-1 4h1m-1 5h1m-1 5h1m-1 4h1m-1 5h1m-1 5h1m-1 4h1m-1 5h1m-1 5h1m-1 4h1m-1 5h1m-1 4h1m-1 5h1m-1 5h1m-1 4h1m-1 5h1m-1 5h1m-1 4h1m-1 5h1m-1 5h1m-1 4h1m-1 5h1m-1 4h1m-1 5h1m-1 5h1m-1 4h1m-1 5h1m-1 5h1m-1 4h1m-1 5h1m-1 5h1m-1 4h1m-1 5h1m-1 5h1m-1 4h1m-1 5h1m-1 4h1m-1 5h1m-1 5h1m-1 4h1M929 525.5h1m-1 5h1m-1 4h1m-1 5h1m-1 5h1m-1 4h1m-1 5h1m-1 4h1m-1 5h1m-1 5h1m-1 4h1m-1 5h1m-1 5h1m-1 4h1m-1 5h1m-1 5h1m-1 4h1m-1 5h1m-1 5h1m-1 4h1m-1 5h1m-1 4h1m-1 5h1m-1 5h1m-1 4h1m-1 5h1m-1 5h1m-1 4h1m-1 5h1m-1 5h1m-1 4h1m-1 5h1m-1 4h1m-1 5h1m-1 5h1m-1 4h1m-1 5h1m-1 5h1m-1 4h1m-1 5h1m-1 5h1m-1 4h1m-1 5h1m-1 5h1m-1 4h1m-1 5h1m-1 4h1m-1 5h1m-1 5h1m-1 4h1M1104 525.5h1m-1 5h1m-1 4h1m-1 5h1m-1 5h1m-1 4h1m-1 5h1m-1 4h1m-1 5h1m-1 5h1m-1 4h1m-1 5h1m-1 5h1m-1 4h1m-1 5h1m-1 5h1m-1 4h1m-1 5h1m-1 5h1m-1 4h1m-1 5h1m-1 4h1m-1 5h1m-1 5h1m-1 4h1m-1 5h1m-1 5h1m-1 4h1m-1 5h1m-1 5h1m-1 4h1m-1 5h1m-1 4h1m-1 5h1m-1 5h1m-1 4h1m-1 5h1m-1 5h1m-1 4h1m-1 5h1m-1 5h1m-1 4h1m-1 5h1m-1 5h1m-1 4h1m-1 5h1m-1 4h1m-1 5h1m-1 5h1m-1 4h1M1279 525.5h1m-1 5h1m-1 4h1m-1 5h1m-1 5h1m-1 4h1m-1 5h1m-1 4h1m-1 5h1m-1 5h1m-1 4h1m-1 5h1m-1 5h1m-1 4h1m-1 5h1m-1 5h1m-1 4h1m-1 5h1m-1 5h1m-1 4h1m-1 5h1m-1 4h1m-1 5h1m-1 5h1m-1 4h1m-1 5h1m-1 5h1m-1 4h1m-1 5h1m-1 5h1m-1 4h1m-1 5h1m-1 4h1m-1 5h1m-1 5h1m-1 4h1m-1 5h1m-1 5h1m-1 4h1m-1 5h1m-1 5h1m-1 4h1m-1 5h1m-1 5h1m-1 4h1m-1 5h1m-1 4h1m-1 5h1m-1 5h1m-1 4h1M1454 525.5h1m-1 5h1m-1 4h1m-1 5h1m-1 5h1m-1 4h1m-1 5h1m-1 4h1m-1 5h1m-1 5h1m-1 4h1m-1 5h1m-1 5h1m-1 4h1m-1 5h1m-1 5h1m-1 4h1m-1 5h1m-1 5h1m-1 4h1m-1 5h1m-1 4h1m-1 5h1m-1 5h1m-1 4h1m-1 5h1m-1 5h1m-1 4h1m-1 5h1m-1 5h1m-1 4h1m-1 5h1m-1 4h1m-1 5h1m-1 5h1m-1 4h1m-1 5h1m-1 5h1m-1 4h1m-1 5h1m-1 5h1m-1 4h1m-1 5h1m-1 5h1m-1 4h1m-1 5h1m-1 4h1m-1 5h1m-1 5h1m-1 4h1M1629 525.5h1m-1 5h1m-1 4h1m-1 5h1m-1 5h1m-1 4h1m-1 5h1m-1 4h1m-1 5h1m-1 5h1m-1 4h1m-1 5h1m-1 5h1m-1 4h1m-1 5h1m-1 5h1m-1 4h1m-1 5h1m-1 5h1m-1 4h1m-1 5h1m-1 4h1m-1 5h1m-1 5h1m-1 4h1m-1 5h1m-1 5h1m-1 4h1m-1 5h1m-1 5h1m-1 4h1m-1 5h1m-1 4h1m-1 5h1m-1 5h1m-1 4h1m-1 5h1m-1 5h1m-1 4h1m-1 5h1m-1 5h1m-1 4h1m-1 5h1m-1 5h1m-1 4h1m-1 5h1m-1 4h1m-1 5h1m-1 5h1m-1 4h1M20 777.5h1m69 0h1m34 0h1m34 0h1m34 0h1m34 0h1m34 0h1m34 0h1m34 0h1m34 0h1m34 0h1m34 0h1m34 0h1m34 0h1m34 0h1m34 0h1m34 0h1m34 0h1m34 0h1m34 0h1m34 0h1m34 0h1m34 0h1m33 0h1m34 0h1m34 0h1m34 0h1m34 0h1m34 0h1m34 0h1m34 0h1m34 0h1m34 0h1m34 0h1m34 0h1m34 0h1m34 0h1m34 0h1m34 0h1m34 0h1m34 0h1m34 0h1m34 0h1m34 0h1m34 0h1m34 0h1m34 0h1m34 0h1m33 0h1M20 800.5h1m69 0h1m34 0h1m34 0h1m34 0h1m34 0h1m34 0h1m34 0h1m34 0h1m34 0h1m34 0h1m34 0h1m34 0h1m34 0h1m34 0h1m34 0h1m34 0h1m34 0h1m34 0h1m34 0h1m34 0h1m34 0h1m34 0h1m33 0h1m34 0h1m34 0h1m34 0h1m34 0h1m34 0h1m34 0h1m34 0h1m34 0h1m34 0h1m34 0h1m34 0h1m34 0h1m34 0h1m34 0h1m34 0h1m34 0h1m34 0h1m34 0h1m34 0h1m34 0h1m34 0h1m34 0h1m34 0h1m34 0h1m33 0h1M20 823.5h1m69 0h1m34 0h1m34 0h1m34 0h1m34 0h1m34 0h1m34 0h1m34 0h1m34 0h1m34 0h1m34 0h1m34 0h1m34 0h1m34 0h1m34 0h1m34 0h1m34 0h1m34 0h1m34 0h1m34 0h1m34 0h1m34 0h1m33 0h1m34 0h1m34 0h1m34 0h1m34 0h1m34 0h1m34 0h1m34 0h1m34 0h1m34 0h1m34 0h1m34 0h1m34 0h1m34 0h1m34 0h1m34 0h1m34 0h1m34 0h1m34 0h1m34 0h1m34 0h1m34 0h1m34 0h1m34 0h1m34 0h1m33 0h1M20 847.5h1m69 0h1m34 0h1m34 0h1m34 0h1m34 0h1m34 0h1m34 0h1m34 0h1m34 0h1m34 0h1m34 0h1m34 0h1m34 0h1m34 0h1m34 0h1m34 0h1m34 0h1m34 0h1m34 0h1m34 0h1m34 0h1m34 0h1m33 0h1m34 0h1m34 0h1m34 0h1m34 0h1m34 0h1m34 0h1m34 0h1m34 0h1m34 0h1m34 0h1m34 0h1m34 0h1m34 0h1m34 0h1m34 0h1m34 0h1m34 0h1m34 0h1m34 0h1m34 0h1m34 0h1m34 0h1m34 0h1m34 0h1m33 0h1M20 870.5h1m69 0h1m34 0h1m34 0h1m34 0h1m34 0h1m34 0h1m34 0h1m34 0h1m34 0h1m34 0h1m34 0h1m34 0h1m34 0h1m34 0h1m34 0h1m34 0h1m34 0h1m34 0h1m34 0h1m34 0h1m34 0h1m34 0h1m33 0h1m34 0h1m34 0h1m34 0h1m34 0h1m34 0h1m34 0h1m34 0h1m34 0h1m34 0h1m34 0h1m34 0h1m34 0h1m34 0h1m34 0h1m34 0h1m34 0h1m34 0h1m34 0h1m34 0h1m34 0h1m34 0h1m34 0h1m34 0h1m34 0h1m33 0h1M20 893.5h1m69 0h1m34 0h1m34 0h1m34 0h1m34 0h1m34 0h1m34 0h1m34 0h1m34 0h1m34 0h1m34 0h1m34 0h1m34 0h1m34 0h1m34 0h1m34 0h1m34 0h1m34 0h1m34 0h1m34 0h1m34 0h1m34 0h1m33 0h1m34 0h1m34 0h1m34 0h1m34 0h1m34 0h1m34 0h1m34 0h1m34 0h1m34 0h1m34 0h1m34 0h1m34 0h1m34 0h1m34 0h1m34 0h1m34 0h1m34 0h1m34 0h1m34 0h1m34 0h1m34 0h1m34 0h1m34 0h1m34 0h1m33 0h1M20 917.5h1m69 0h1m34 0h1m34 0h1m34 0h1m34 0h1m34 0h1m34 0h1m34 0h1m34 0h1m34 0h1m34 0h1m34 0h1m34 0h1m34 0h1m34 0h1m34 0h1m34 0h1m34 0h1m34 0h1m34 0h1m34 0h1m34 0h1m33 0h1m34 0h1m34 0h1m34 0h1m34 0h1m34 0h1m34 0h1m34 0h1m34 0h1m34 0h1m34 0h1m34 0h1m34 0h1m34 0h1m34 0h1m34 0h1m34 0h1m34 0h1m34 0h1m34 0h1m34 0h1m34 0h1m34 0h1m34 0h1m34 0h1m33 0h1M20 940.5h1m69 0h1m34 0h1m34 0h1m34 0h1m34 0h1m34 0h1m34 0h1m34 0h1m34 0h1m34 0h1m34 0h1m34 0h1m34 0h1m34 0h1m34 0h1m34 0h1m34 0h1m34 0h1m34 0h1m34 0h1m34 0h1m34 0h1m33 0h1m34 0h1m34 0h1m34 0h1m34 0h1m34 0h1m34 0h1m34 0h1m34 0h1m34 0h1m34 0h1m34 0h1m34 0h1m34 0h1m34 0h1m34 0h1m34 0h1m34 0h1m34 0h1m34 0h1m34 0h1m34 0h1m34 0h1m34 0h1m34 0h1m33 0h1M20 963.5h1m69 0h1m34 0h1m34 0h1m34 0h1m34 0h1m34 0h1m34 0h1m34 0h1m34 0h1m34 0h1m34 0h1m34 0h1m34 0h1m34 0h1m34 0h1m34 0h1m34 0h1m34 0h1m34 0h1m34 0h1m34 0h1m34 0h1m33 0h1m34 0h1m34 0h1m34 0h1m34 0h1m34 0h1m34 0h1m34 0h1m34 0h1m34 0h1m34 0h1m34 0h1m34 0h1m34 0h1m34 0h1m34 0h1m34 0h1m34 0h1m34 0h1m34 0h1m34 0h1m34 0h1m34 0h1m34 0h1m34 0h1m33 0h1M20 987.5h1m69 0h1m34 0h1m34 0h1m34 0h1m34 0h1m34 0h1m34 0h1m34 0h1m34 0h1m34 0h1m34 0h1m34 0h1m34 0h1m34 0h1m34 0h1m34 0h1m34 0h1m34 0h1m34 0h1m34 0h1m34 0h1m34 0h1m33 0h1m34 0h1m34 0h1m34 0h1m34 0h1m34 0h1m34 0h1m34 0h1m34 0h1m34 0h1m34 0h1m34 0h1m34 0h1m34 0h1m34 0h1m34 0h1m34 0h1m34 0h1m34 0h1m34 0h1m34 0h1m34 0h1m34 0h1m34 0h1m34 0h1m33 0h1M230 763.5h1m-1 4h1m-1 5h1m-1 5h1m-1 4h1m-1 5h1m-1 5h1m-1 4h1m-1 5h1m-1 5h1m-1 4h1m-1 5h1m-1 5h1m-1 4h1m-1 5h1m-1 5h1m-1 4h1m-1 5h1m-1 5h1m-1 4h1m-1 5h1m-1 5h1m-1 4h1m-1 5h1m-1 5h1m-1 4h1m-1 5h1m-1 5h1m-1 4h1m-1 5h1m-1 5h1m-1 4h1m-1 5h1m-1 5h1m-1 4h1m-1 5h1m-1 5h1m-1 4h1m-1 5h1m-1 5h1m-1 4h1m-1 5h1m-1 5h1m-1 4h1m-1 5h1m-1 5h1m-1 4h1m-1 5h1m-1 5h1M405 763.5h1m-1 4h1m-1 5h1m-1 5h1m-1 4h1m-1 5h1m-1 5h1m-1 4h1m-1 5h1m-1 5h1m-1 4h1m-1 5h1m-1 5h1m-1 4h1m-1 5h1m-1 5h1m-1 4h1m-1 5h1m-1 5h1m-1 4h1m-1 5h1m-1 5h1m-1 4h1m-1 5h1m-1 5h1m-1 4h1m-1 5h1m-1 5h1m-1 4h1m-1 5h1m-1 5h1m-1 4h1m-1 5h1m-1 5h1m-1 4h1m-1 5h1m-1 5h1m-1 4h1m-1 5h1m-1 5h1m-1 4h1m-1 5h1m-1 5h1m-1 4h1m-1 5h1m-1 5h1m-1 4h1m-1 5h1m-1 5h1M580 763.5h1m-1 4h1m-1 5h1m-1 5h1m-1 4h1m-1 5h1m-1 5h1m-1 4h1m-1 5h1m-1 5h1m-1 4h1m-1 5h1m-1 5h1m-1 4h1m-1 5h1m-1 5h1m-1 4h1m-1 5h1m-1 5h1m-1 4h1m-1 5h1m-1 5h1m-1 4h1m-1 5h1m-1 5h1m-1 4h1m-1 5h1m-1 5h1m-1 4h1m-1 5h1m-1 5h1m-1 4h1m-1 5h1m-1 5h1m-1 4h1m-1 5h1m-1 5h1m-1 4h1m-1 5h1m-1 5h1m-1 4h1m-1 5h1m-1 5h1m-1 4h1m-1 5h1m-1 5h1m-1 4h1m-1 5h1m-1 5h1M755 763.5h1m-1 4h1m-1 5h1m-1 5h1m-1 4h1m-1 5h1m-1 5h1m-1 4h1m-1 5h1m-1 5h1m-1 4h1m-1 5h1m-1 5h1m-1 4h1m-1 5h1m-1 5h1m-1 4h1m-1 5h1m-1 5h1m-1 4h1m-1 5h1m-1 5h1m-1 4h1m-1 5h1m-1 5h1m-1 4h1m-1 5h1m-1 5h1m-1 4h1m-1 5h1m-1 5h1m-1 4h1m-1 5h1m-1 5h1m-1 4h1m-1 5h1m-1 5h1m-1 4h1m-1 5h1m-1 5h1m-1 4h1m-1 5h1m-1 5h1m-1 4h1m-1 5h1m-1 5h1m-1 4h1m-1 5h1m-1 5h1M929 763.5h1m-1 4h1m-1 5h1m-1 5h1m-1 4h1m-1 5h1m-1 5h1m-1 4h1m-1 5h1m-1 5h1m-1 4h1m-1 5h1m-1 5h1m-1 4h1m-1 5h1m-1 5h1m-1 4h1m-1 5h1m-1 5h1m-1 4h1m-1 5h1m-1 5h1m-1 4h1m-1 5h1m-1 5h1m-1 4h1m-1 5h1m-1 5h1m-1 4h1m-1 5h1m-1 5h1m-1 4h1m-1 5h1m-1 5h1m-1 4h1m-1 5h1m-1 5h1m-1 4h1m-1 5h1m-1 5h1m-1 4h1m-1 5h1m-1 5h1m-1 4h1m-1 5h1m-1 5h1m-1 4h1m-1 5h1m-1 5h1M1104 763.5h1m-1 4h1m-1 5h1m-1 5h1m-1 4h1m-1 5h1m-1 5h1m-1 4h1m-1 5h1m-1 5h1m-1 4h1m-1 5h1m-1 5h1m-1 4h1m-1 5h1m-1 5h1m-1 4h1m-1 5h1m-1 5h1m-1 4h1m-1 5h1m-1 5h1m-1 4h1m-1 5h1m-1 5h1m-1 4h1m-1 5h1m-1 5h1m-1 4h1m-1 5h1m-1 5h1m-1 4h1m-1 5h1m-1 5h1m-1 4h1m-1 5h1m-1 5h1m-1 4h1m-1 5h1m-1 5h1m-1 4h1m-1 5h1m-1 5h1m-1 4h1m-1 5h1m-1 5h1m-1 4h1m-1 5h1m-1 5h1M1279 763.5h1m-1 4h1m-1 5h1m-1 5h1m-1 4h1m-1 5h1m-1 5h1m-1 4h1m-1 5h1m-1 5h1m-1 4h1m-1 5h1m-1 5h1m-1 4h1m-1 5h1m-1 5h1m-1 4h1m-1 5h1m-1 5h1m-1 4h1m-1 5h1m-1 5h1m-1 4h1m-1 5h1m-1 5h1m-1 4h1m-1 5h1m-1 5h1m-1 4h1m-1 5h1m-1 5h1m-1 4h1m-1 5h1m-1 5h1m-1 4h1m-1 5h1m-1 5h1m-1 4h1m-1 5h1m-1 5h1m-1 4h1m-1 5h1m-1 5h1m-1 4h1m-1 5h1m-1 5h1m-1 4h1m-1 5h1m-1 5h1M1454 763.5h1m-1 4h1m-1 5h1m-1 5h1m-1 4h1m-1 5h1m-1 5h1m-1 4h1m-1 5h1m-1 5h1m-1 4h1m-1 5h1m-1 5h1m-1 4h1m-1 5h1m-1 5h1m-1 4h1m-1 5h1m-1 5h1m-1 4h1m-1 5h1m-1 5h1m-1 4h1m-1 5h1m-1 5h1m-1 4h1m-1 5h1m-1 5h1m-1 4h1m-1 5h1m-1 5h1m-1 4h1m-1 5h1m-1 5h1m-1 4h1m-1 5h1m-1 5h1m-1 4h1m-1 5h1m-1 5h1m-1 4h1m-1 5h1m-1 5h1m-1 4h1m-1 5h1m-1 5h1m-1 4h1m-1 5h1m-1 5h1M1629 763.5h1m-1 4h1m-1 5h1m-1 5h1m-1 4h1m-1 5h1m-1 5h1m-1 4h1m-1 5h1m-1 5h1m-1 4h1m-1 5h1m-1 5h1m-1 4h1m-1 5h1m-1 5h1m-1 4h1m-1 5h1m-1 5h1m-1 4h1m-1 5h1m-1 5h1m-1 4h1m-1 5h1m-1 5h1m-1 4h1m-1 5h1m-1 5h1m-1 4h1m-1 5h1m-1 5h1m-1 4h1m-1 5h1m-1 5h1m-1 4h1m-1 5h1m-1 5h1m-1 4h1m-1 5h1m-1 5h1m-1 4h1m-1 5h1m-1 5h1m-1 4h1m-1 5h1m-1 5h1m-1 4h1m-1 5h1m-1 5h1" stroke="#c4c4c4" stroke-width="1" shape-rendering="crispEdges" fill="none"/>
<g stroke="#d0d0d0" stroke-width="1" shape-rendering="crispEdges" fill="none" stroke-dasharray="5 5">
<line x1="3" y1="266.5" x2="1722" y2="266.5"/>
<line x1="3" y1="430.5" x2="1722" y2="430.5"/>
<line x1="3" y1="734.5" x2="1722" y2="734.5"/>
<line x1="3" y1="964.5" x2="1722" y2="964.5"/>
</g>
</g>
</svg>
<div class="lab" style="top:74.1px;color:#f6ee27">40 V</div>
<div class="lab" style="top:97.3px;color:#f6ee27">35 V</div>
<div class="lab" style="top:120.5px;color:#f6ee27">30 V</div>
<div class="lab" style="top:143.7px;color:#f6ee27">25 V</div>
<div class="lab" style="top:166.9px;color:#f6ee27">20 V</div>
<div class="lab" style="top:190.1px;color:#f6ee27">15 V</div>
<div class="lab" style="top:213.3px;color:#f6ee27">10 V</div>
<div class="lab" style="top:236.5px;color:#f6ee27">5 V</div>
<div class="lab" style="top:259.7px;color:#f6ee27">0 V</div>
<div class="lab" style="top:307.9px;color:#88c82a">1 V</div>
<div class="lab" style="top:331.1px;color:#88c82a">800 mV</div>
<div class="lab" style="top:354.3px;color:#88c82a">600 mV</div>
<div class="lab" style="top:377.5px;color:#88c82a">400 mV</div>
<div class="lab" style="top:400.7px;color:#88c82a">200 mV</div>
<div class="lab" style="top:423.9px;color:#88c82a">0 V</div>
<div class="lab" style="top:447.1px;color:#88c82a">-200 mV</div>
<div class="lab" style="top:470.3px;color:#88c82a">-400 mV</div>
<div class="lab" style="top:493.5px;color:#88c82a">-600 mV</div>
<div class="lab" style="top:541.6px;color:#f7941d">582.097 mT</div>
<div class="lab" style="top:564.8px;color:#f7941d">509.335 mT</div>
<div class="lab" style="top:588.0px;color:#f7941d">436.573 mT</div>
<div class="lab" style="top:611.2px;color:#f7941d">363.811 mT</div>
<div class="lab" style="top:634.4px;color:#f7941d">291.049 mT</div>
<div class="lab" style="top:657.6px;color:#f7941d">218.286 mT</div>
<div class="lab" style="top:680.8px;color:#f7941d">145.524 mT</div>
<div class="lab" style="top:704.0px;color:#f7941d">72.762 mT</div>
<div class="lab" style="top:727.2px;color:#f7941d">0 T</div>
<div class="lab" style="top:771.2px;color:#7f2e98">9.079 kA</div>
<div class="lab" style="top:794.5px;color:#7f2e98">7.944 kA</div>
<div class="lab" style="top:817.9px;color:#7f2e98">6.809 kA</div>
<div class="lab" style="top:841.2px;color:#7f2e98">5.674 kA</div>
<div class="lab" style="top:864.5px;color:#7f2e98">4.540 kA</div>
<div class="lab" style="top:887.8px;color:#7f2e98">3.405 kA</div>
<div class="lab" style="top:911.2px;color:#7f2e98">2.270 kA</div>
<div class="lab" style="top:934.5px;color:#7f2e98">1.135 kA</div>
<div class="lab" style="top:957.8px;color:#7f2e98">0 A</div>
<div class="tlab" style="left:55.0px">0 s</div>
<div class="tlab" style="left:230.0px">3 ms</div>
<div class="tlab" style="left:404.8px">6 ms</div>
<div class="tlab" style="left:579.6px">9 ms</div>
<div class="tlab" style="left:754.4px">12 ms</div>
<div class="tlab" style="left:929.2px">15 ms</div>
<div class="tlab" style="left:1104.0px">18 ms</div>
<div class="tlab" style="left:1278.8px">21 ms</div>
<div class="tlab" style="left:1453.6px">24 ms</div>
<div class="tlab" style="left:1628.4px">27 ms</div>
<svg width="1920" height="1080" viewBox="0 0 1920 1080">
<defs><clipPath id="cp2"><rect x="3" y="57" width="1748" height="935"/></clipPath></defs>
<g clip-path="url(#cp2)" fill="none" stroke-width="1" shape-rendering="crispEdges" stroke-linejoin="miter">
<line x1="55.5" y1="94" x2="55.5" y2="992" stroke="#d0d0d0" stroke-dasharray="5 5"/>
<polyline stroke="#f7941d" points="3,733.5 57,733.5 58,732.5 61,732.5 62,731.5 66,731.5 67,730.5 70,730.5 71,729.5 74,729.5 75,728.5 79,728.5 80,727.5 83,727.5 84,726.5 88,726.5 89,725.5 92,725.5 93,724.5 97,724.5 98,723.5 101,723.5 102,722.5 106,722.5 107,721.5 110,721.5 111,720.5 114,720.5 115,719.5 119,719.5 120,718.5 123,718.5 124,717.5 128,717.5 129,716.5 132,716.5 133,715.5 137,715.5 138,714.5 141,714.5 142,713.5 146,713.5 147,712.5 150,712.5 151,711.5 155,711.5 156,710.5 159,710.5 160,709.5 164,709.5 165,708.5 168,708.5 169,707.5 173,707.5 174,706.5 178,706.5 179,705.5 182,705.5 183,704.5 187,704.5 188,703.5 191,703.5 192,702.5 196,702.5 197,701.5 201,701.5 202,700.5 206,700.5 207,699.5 210,699.5 211,698.5 215,698.5 216,697.5 220,697.5 221,696.5 225,696.5 226,695.5 229,695.5 230,694.5 234,694.5 235,693.5 239,693.5 240,692.5 244,692.5 245,691.5 249,691.5 250,690.5 254,690.5 255,689.5 259,689.5 260,688.5 264,688.5 265,687.5 269,687.5 270,686.5 274,686.5 275,685.5 279,685.5 280,684.5 284,684.5 285,683.5 289,683.5 290,682.5 295,682.5 296,681.5 300,681.5 301,680.5 305,680.5 306,679.5 310,679.5 311,678.5 315,678.5 316,677.5 320,677.5 321,676.5 326,676.5 327,675.5 331,675.5 332,674.5 336,674.5 337,673.5 342,673.5 343,672.5 347,672.5 348,671.5 352,671.5 353,670.5 357,670.5 358,669.5 363,669.5 364,668.5 368,668.5 369,667.5 374,667.5 375,666.5 379,666.5 380,665.5 384,665.5 385,664.5 390,664.5 391,663.5 395,663.5 396,662.5 401,662.5 402,661.5 406,661.5 407,660.5 412,660.5 413,659.5 417,659.5 418,658.5 423,658.5 424,657.5 428,657.5 429,656.5 433,656.5 434,655.5 439,655.5 440,654.5 444,654.5 445,653.5 450,653.5 451,652.5 455,652.5 456,651.5 461,651.5 462,650.5 467,650.5 468,649.5 472,649.5 473,648.5 478,648.5 479,647.5 483,647.5 484,646.5 489,646.5 490,645.5 495,645.5 496,644.5 500,644.5 501,643.5 506,643.5 507,642.5 512,642.5 513,641.5 517,641.5 518,640.5 523,640.5 524,639.5 529,639.5 530,638.5 535,638.5 536,637.5 541,637.5 542,636.5 547,636.5 548,635.5 553,635.5 554,634.5 559,634.5 560,633.5 565,633.5 566,632.5 571,632.5 572,631.5 578,631.5 579,630.5 584,630.5 585,629.5 590,629.5 591,628.5 597,628.5 598,627.5 603,627.5 604,626.5 610,626.5 611,625.5 617,625.5 618,624.5 623,624.5 624,623.5 630,623.5 631,622.5 637,622.5 638,621.5 644,621.5 645,620.5 650,620.5 651,619.5 657,619.5 658,618.5 664,618.5 665,617.5 671,617.5 672,616.5 678,616.5 679,615.5 685,615.5 686,614.5 693,614.5 694,613.5 700,613.5 701,612.5 707,612.5 708,611.5 714,611.5 715,610.5 722,610.5 723,609.5 729,609.5 730,608.5 736,608.5 737,607.5 744,607.5 745,606.5 751,606.5 752,605.5 759,605.5 760,604.5 766,604.5 767,603.5 774,603.5 775,602.5 781,602.5 782,601.5 789,601.5 790,600.5 796,600.5 797,599.5 804,599.5 805,598.5 812,598.5 813,597.5 819,597.5 820,596.5 827,596.5 828,595.5 835,595.5 836,594.5 843,594.5 844,593.5 851,593.5 852,592.5 859,592.5 860,591.5 867,591.5 868,590.5 875,590.5 876,589.5 883,589.5 884,588.5 892,588.5 893,587.5 900,587.5 901,586.5 909,586.5 910,585.5 918,585.5 919,584.5 927,584.5 928,583.5 936,583.5 937,582.5 945,582.5 946,581.5 955,581.5 956,580.5 964,580.5 965,579.5 973,579.5 974,578.5 983,578.5 984,577.5 993,577.5 994,576.5 1003,576.5 1004,575.5 1013,575.5 1014,574.5 1023,574.5 1024,573.5 1033,573.5 1034,572.5 1044,572.5 1045,571.5 1055,571.5 1056,570.5 1066,570.5 1067,569.5 1078,569.5 1079,568.5 1090,568.5 1091,567.5 1103,567.5 1104,566.5 1117,566.5 1118,565.5 1130,565.5 1131,564.5 1144,564.5 1145,563.5 1158,563.5 1159,562.5 1173,562.5 1174,561.5 1189,561.5 1190,560.5 1205,560.5 1206,559.5 1222,559.5 1223,558.5 1240,558.5 1241,557.5 1259,557.5 1260,556.5 1281,556.5 1282,555.5 1305,555.5 1306,554.5 1331,554.5 1332,553.5 1360,553.5 1361,552.5 1391,552.5 1392,551.5 1426,551.5 1427,550.5 1463,550.5 1464,549.5 1501,549.5 1502,548.5 1679,548.5 1680,549.5 1721,549.5 1722,550.5 1751,550.5"/>
<polyline stroke="#7f2e98" points="3,963.5 115,963.5 116,964.5 117,964.5 118,965.5 118.75,966.5 132,966.5 133,965.5 181,965.5 182,964.5 212.5,964.5 213,963.5 215,961.5 216,961.5 222,955.5 222.5,955.5 223,954.5 224,954.5 226,952.5 228,952.5 229,951.5 230,951.5 231,950.5 232,950.5 233,949.5 234,949.5 235,948.5 237,948.5 238,947.5 239,947.5 240,946.5 242,946.5 243,945.5 244,945.5 246,943.5 247,943.5 248,942.5 250,942.5 251,941.5 252,941.5 254,939.5 259,939.5 261,937.5 262,937.5 264,935.5 267,935.5 268,934.5 269,934.5 270,933.5 272,933.5 274,931.5 275,931.5 276,930.5 278,930.5 280,928.5 282,928.5 283,927.5 284,927.5 286,925.5 292,925.5 293,924.5 295,924.5 296,923.5 297,923.5 298,922.5 299,922.5 300,921.5 303,921.5 305,919.5 306,920.5 307,920.5 308,919.5 310,919.5 311,918.5 312,918.5 313,917.5 316,917.5 317,916.5 318,916.5 319,915.5 320,915.5 321,914.5 323,914.5 324,913.5 328,913.5 329,912.5 330,912.5 331,911.5 333,911.5 334,910.5 335,910.5 336,909.5 339,909.5 340,908.5 341,908.5 342,907.5 346,907.5 347,906.5 348,906.5 349,905.5 350,905.5 351,904.5 353,904.5 354,903.5 355,903.5 356,902.5 361,902.5 362,901.5 363,901.5 364,900.5 366,900.5 367,899.5 369,899.5 370,898.5 375,898.5 376,897.5 379,897.5 380,896.5 381,896.5 382,895.5 384,895.5 385,894.5 387,894.5 388,893.5 389,893.5 390,892.5 394,892.5 395,891.5 398,891.5 399,890.5 401,890.5 402,889.5 404,889.5 406,887.5 411,887.5 413,885.5 414,886.5 415,885.5 417,885.5 418,884.5 420,884.5 422,882.5 427,882.5 428,881.5 429,881.5 430,880.5 434,880.5 435,879.5 436,879.5 437,878.5 441,878.5 442,877.5 443,877.5 444,876.5 448,876.5 449,875.5 451,875.5 452,874.5 455,874.5 456,873.5 458,873.5 460,871.5 465,871.5 466,870.5 468,870.5 469,869.5 470,869.5 471,868.5 472,869.5 473,868.5 475,868.5 476,867.5 480,867.5 481,866.5 485,866.5 486,865.5 488,865.5 489,864.5 493,864.5 494,863.5 496,863.5 497,862.5 498,862.5 499,861.5 501,861.5 502,860.5 504,860.5 505,861.5 506,860.5 508,860.5 509,859.5 510,859.5 511,860.5 512,859.5 514,859.5 515,858.5 516,858.5 516.2,859.5 517,858.5 518,858.5 520,856.5 525,856.5 526,855.5 527,855.5 528,854.5 534,854.5 535,853.5 537,853.5 538,852.5 540,852.5 541,851.5 543,851.5 544,850.5 545,851.5 546,850.5 549,850.5 550,849.5 552,849.5 553,848.5 555,848.5 556,847.5 560,847.5 561,846.5 562,846.5 563,845.5 564,846.5 569,846.5 570,845.5 571,845.5 574,842.5 575,843.5 576,842.5 581,842.5 582,841.5 585,841.5 586,840.5 587,840.5 588,839.5 589,839.5 590,840.5 592,840.5 593,839.5 597,839.5 598,838.5 600,838.5 602,836.5 605,836.5 606,837.5 607,836.5 610,836.5 611,835.5 618,835.5 619,834.5 620,834.5 621,833.5 626,833.5 627,832.5 628,833.5 629,832.5 630,832.5 631,831.5 635,831.5 636,830.5 637,830.5 638,829.5 642,829.5 643,828.5 651,828.5 652,827.5 656,827.5 657,826.5 662,826.5 663,825.5 666,825.5 667,824.5 668,824.5 669,823.5 670,824.5 671,823.5 672,823.5 673,824.5 674,823.5 676,823.5 677,822.5 684,822.5 686,820.5 687,820.5 688,819.5 689,819.5 691,817.5 693,817.5 693.4,816.5 694,817.5 696,817.5 697,818.5 697.6,819.5 699,819.5 700,818.5 707.5,818.5 708,817.5 709,817.5 711,815.5 712,815.5 713,814.5 716,814.5 717,813.5 723,813.5 725,811.5 730,811.5 731,810.5 741.2,810.5 742,809.5 743,808.5 744,808.5 746,806.5 748,806.5 749,807.5 750,807.5 751,808.5 752,808.5 752.5,809.5 753,808.5 758,803.5 758.1,803.5 759,796.5 759.2,795.5 760,806.5 760.3,810.5 761,812.5 762,814.5 762.3,815.5 763,814.5 764,814.5 765,813.5 766,813.5 767,812.5 769,812.5 769.3,811.5 776,811.5 777,810.5 781,810.5 783,808.5 783.4,807.5 785,807.5 786,808.5 787.6,808.5 788,807.5 790,803.5 790.4,802.5 791,803.5 792,803.5 793,804.5 794,804.5 795,805.5 797,805.5 797.5,806.5 798,805.5 799,805.5 800,804.5 801,804.5 802,803.5 803,803.5 805,801.5 806,801.5 807,800.5 816,800.5 818,802.5 819,802.5 820,803.5 828.4,803.5 829.8,782.5 831.2,803.5 832,805.5 833,808.5 833.5,810.5 835,810.5 836,809.5 836.3,809.5 836.8,803.5 837,803.5 839,809.5 839.7,811.5 840,811.5 841,810.5 842,810.5 843,809.5 844,809.5 845,808.5 847,808.5 848,807.5 852.3,807.5 853,803.5 853.7,800.5 857.9,800.5 858,798.5 858.8,787.5 859,790.5 859.9,807.5 860,807.5 861,809.5 864,812.5 865,814.5 866,813.5 867,813.5 868,812.5 869,812.5 870,811.5 872,811.5 873,810.5 874,810.5 876,808.5 877,808.5 880,805.5 880.4,805.5 881,801.5 882,793.5 882.7,788.5 883,791.5 884,803.5 884.6,810.5 885,811.5 887,817.5 887.5,818.5 888,818.5 889,817.5 890,817.5 891,816.5 892,816.5 897,826.5 897.3,827.5 898,826.5 900,824.5 901,824.5 901.5,823.5 904,828.5 904.3,828.5 905,829.5 907,829.5 908,830.5 909,830.5 910,831.5 911,831.5 912,832.5 912.2,832.5 913,830.5 915,828.5 916,826.5 918,824.5 919,822.5 920,821.5 921,819.5 925,819.5 926,818.5 926.3,818.5 927,815.5 928.2,809.5 929,811.5 932,820.5 932.5,821.5 933,821.5 938,816.5 938.1,816.5 939,809.5 939.5,805.5 940,810.5 941,819.5 941.5,824.5 942,826.5 944,832.5 944.3,833.5 945,832.5 946,831.5 947,829.5 948,828.5 949,826.5 950,825.5 950.7,824.5 951,824.5 952,822.5 955,819.5 956,817.5 956.4,817.5 957,818.5 958,819.5 959,821.5 961,821.5 962,820.5 962.8,820.5 963.4,805.5 964,814.5 964.8,825.5 967,836.5 967.6,840.5 971,840.5 972,841.5 973.2,841.5 974,844.5 975,847.5 976,851.5 980,863.5 981,867.5 983,873.5 983.1,873.5 984,876.5 985,880.5 987,886.5 988,890.5 988.1,890.5 989,895.5 991,905.5 992,909.5 996,921.5 997,925.5 999,931.5 999.4,932.5 1000,934.5 1001,936.5 1002,939.5 1003,941.5 1003.5,943.5 1004,943.5 1007,949.5 1007.8,951.5 1008,951.5 1009,952.5 1010,952.5 1013,955.5 1014,955.5 1016,957.5 1017,957.5 1018,958.5 1020,958.5 1021,959.5 1023,959.5 1024,960.5 1025,960.5 1026,961.5 1028,961.5 1029,962.5 1031,962.5 1032,963.5 1034,963.5 1035,964.5 1038,964.5 1039,965.5 1045,965.5 1046,966.5 1052,966.5 1052.8,967.5 1381,967.5 1382,968.5 1383,967.5 1751,967.5"/>
<polyline stroke="#88c82a" points="3,429.5 15,429.5 16,428.5 17,429.5 21,429.5 22,428.5 23,429.5 33,429.5 34,428.5 35,429.5 93,429.5 94,428.5 95,429.5 97,429.5 98,428.5 99,429.5 100,428.5 101,428.5 102,429.5 106,429.5 107,428.5 108,429.5 118,429.5 119,428.5 120,429.5 121,428.5 122,429.5 139,429.5 140,428.5 141,429.5 142,428.5 143,429.5 163,429.5 164,428.5 165,429.5 169,429.5 170,428.5 171,429.5 174,429.5 175,428.5 176,429.5 184,429.5 185,428.5 186,429.5 198,429.5 199,428.5 200,429.5 218,429.5 219,428.5 220,428.5 221,427.5 222,427.5 249,400.5 250,400.5 252,398.5 254,398.5 255,397.5 273,397.5 274,398.5 281,398.5 282,399.5 305,399.5 306,400.5 752,400.5 753,399.5 757,399.5 758,398.5 759,398.5 761,396.5 768,396.5 769,397.5 773,397.5 774,398.5 777,398.5 778,399.5 782,399.5 783,400.5 810,400.5 811,399.5 829,399.5 830,398.5 831,396.5 832,395.5 840,395.5 841,396.5 843,396.5 844,397.5 846,397.5 847,398.5 849,398.5 850,399.5 858,399.5 862,395.5 865,395.5 866,396.5 872,396.5 873,397.5 875,397.5 876,398.5 878,398.5 879,399.5 881,399.5 885,395.5 891,395.5 892,394.5 912,394.5 913,395.5 915,395.5 916,396.5 918,396.5 919,397.5 922,397.5 923,398.5 925,398.5 926,399.5 931,399.5 932,398.5 937,398.5 938,397.5 939,397.5 940,396.5 941,396.5 942,395.5 943,395.5 944,396.5 946,396.5 947,397.5 949,397.5 950,398.5 959,398.5 960,399.5 962,399.5 964,397.5 965,395.5 966,394.5 978,394.5 979,393.5 994,393.5 995,394.5 996,394.5 997,395.5 998,395.5 999,396.5 1000,396.5 1001,397.5 1002,397.5 1003,398.5 1004,398.5 1007,401.5 1008,401.5 1011,404.5 1012,404.5 1015,407.5 1017,407.5 1018,408.5 1019,408.5 1020,409.5 1021,409.5 1022,410.5 1023,410.5 1024,411.5 1026,411.5 1027,412.5 1028,412.5 1029,413.5 1030,413.5 1031,414.5 1033,414.5 1034,415.5 1037,415.5 1038,416.5 1040,416.5 1041,417.5 1043,417.5 1044,418.5 1046,418.5 1047,419.5 1049,419.5 1050,420.5 1055,420.5 1056,421.5 1061,421.5 1062,422.5 1067,422.5 1068,423.5 1073,423.5 1074,424.5 1083,424.5 1084,425.5 1094,425.5 1095,426.5 1111,426.5 1112,427.5 1134,427.5 1135,428.5 1254,428.5 1255,427.5 1256,428.5 1276,428.5 1277,427.5 1278,428.5 1287,428.5 1288,427.5 1289,428.5 1295,428.5 1296,427.5 1297,428.5 1299,428.5 1300,429.5 1318,429.5 1319,428.5 1320,429.5 1326,429.5 1327,428.5 1328,429.5 1343,429.5 1344,428.5 1345,429.5 1356,429.5 1357,428.5 1358,429.5 1364,429.5 1365,428.5 1366,429.5 1378,429.5 1379,428.5 1380,429.5 1385,429.5 1386,428.5 1387,429.5 1388,429.5 1389,428.5 1390,429.5 1406,429.5 1407,428.5 1408,429.5 1418,429.5 1419,428.5 1420,429.5 1431,429.5 1432,428.5 1433,428.5 1434,429.5 1435,429.5 1436,428.5 1437,429.5 1477,429.5 1478,428.5 1479,429.5 1486,429.5 1487,428.5 1488,429.5 1492,429.5 1493,428.5 1494,428.5 1495,429.5 1512,429.5 1513,428.5 1514,429.5 1517,429.5 1518,428.5 1519,429.5 1524,429.5 1525,428.5 1526,429.5 1527,428.5 1528,429.5 1538,429.5 1539,428.5 1540,429.5 1541,429.5 1542,428.5 1543,429.5 1565,429.5 1566,428.5 1567,429.5 1586,429.5 1587,428.5 1588,429.5 1598,429.5 1599,428.5 1600,428.5 1601,429.5 1621,429.5 1622,428.5 1623,429.5 1626,429.5 1627,428.5 1628,429.5 1640,429.5 1641,428.5 1642,429.5 1643,428.5 1644,429.5 1645,429.5 1646,428.5 1647,429.5 1677,429.5 1678,428.5 1679,429.5 1680,428.5 1681,429.5 1682,428.5 1683,429.5 1693,429.5 1694,428.5 1695,429.5 1700,429.5 1701,428.5 1702,429.5 1750,429.5 1751,428.5"/>
<polyline stroke="#f6ee27" points="3,264.5 55,264.5 56,261.5 56.5,270.5 57,264.5 64,264.5 65,265.5 68,265.5 69,264.5 75,264.5 76,263.5 77,264.5 78,264.5 79,265.5 85,265.5 86,264.5 87,264.5 88,265.5 91,265.5 92,264.5 97,264.5 98,263.5 99,264.5 101,264.5 102,265.5 103,264.5 109,264.5 110,265.5 111,264.5 112,265.5 113,264.5 114,265.5 114.4,264.5 115,261.5 115.5,258.5 118,253.5 118.75,251.5 119,251.5 120,250.5 121,248.5 125,244.5 126,244.5 126.6,243.5 127,243.5 134,236.5 134.4,236.5 135,235.5 136,235.5 138,233.5 139,233.5 141,231.5 142,231.5 143,230.5 143.75,230.5 144,229.5 145,229.5 146,228.5 147,228.5 149,226.5 150,226.5 151,225.5 152,225.5 155,222.5 156,222.5 157,221.5 157.8,220.5 159,220.5 160,219.5 161,219.5 162,218.5 163,218.5 164,217.5 166,217.5 167,216.5 168,216.5 169,215.5 170,215.5 172,213.5 175,213.5 177,211.5 178,211.5 179,210.5 182,210.5 183,209.5 185,209.5 186,208.5 187,208.5 188,207.5 189,207.5 190,206.5 191,206.5 192,205.5 196,205.5 197,204.5 200,204.5 201,203.5 202,203.5 203,202.5 204,202.5 205,201.5 207,201.5 208,200.5 210,200.5 210.9,199.5 211,200.5 214,200.5 215,202.5 216,203.5 216.4,204.5 217,205.5 220,211.5 220.3,211.5 221,212.5 222,212.5 223,214.5 224,215.5 225,217.5 229,217.5 230,218.5 231,218.5 232,219.5 236,219.5 237,220.5 240,220.5 241,221.5 243,221.5 244,222.5 246,222.5 247,223.5 249,223.5 251,225.5 254,225.5 255,226.5 256,226.5 257,227.5 260,227.5 261,228.5 262,228.5 263,229.5 264,229.5 265,230.5 267,230.5 268,231.5 270.3,231.5 271,232.5 272,231.5 274,233.5 275,233.5 276,232.5 277,233.5 279,231.5 280,231.5 281,232.5 282,234.5 283,233.5 284,233.5 285,232.5 287,232.5 288,230.5 289,232.5 290,231.5 291,231.5 292,230.5 294,232.5 295,232.5 296,233.5 297,233.5 299,231.5 301,233.5 302,232.5 303,232.5 304,234.5 305,232.5 306,233.5 307,232.5 308,232.5 309,233.5 310,232.5 311,233.5 312,231.5 313,230.5 316,233.5 317,232.5 318,232.5 320,230.5 321,230.5 323,228.5 324,230.5 325,231.5 327,231.5 328,232.5 329,231.5 330,231.5 331,232.5 332,231.5 334,231.5 335,230.5 336,230.5 337,231.5 338,229.5 339,231.5 340,231.5 341,230.5 342,232.5 343,232.5 344,231.5 345,232.5 346,232.5 347,233.5 348,231.5 349,233.5 350,231.5 351,230.5 352,231.5 354,229.5 355,230.5 356,230.5 357,232.5 358,231.5 360,231.5 361,229.5 362,231.5 363,231.5 364,232.5 366,230.5 367,230.5 368,231.5 371,231.5 372,230.5 374,232.5 375,232.5 376,231.5 377,231.5 378,232.5 379,232.5 381,230.5 383,230.5 384,231.5 388,231.5 389,230.5 390,231.5 391,231.5 392,232.5 393,232.5 394,231.5 395,232.5 396,231.5 397,231.5 398,230.5 399,232.5 400,232.5 401,230.5 402,231.5 404,231.5 405,233.5 406,232.5 407,230.5 415,230.5 416,232.5 417,230.5 418,230.5 419,229.5 420,230.5 425,230.5 427,232.5 428,230.5 429,230.5 430,229.5 431,230.5 433,230.5 434,227.5 435,229.5 436,229.5 437,228.5 438,228.5 439,229.5 441,229.5 442,230.5 444,230.5 445,231.5 446,230.5 448,230.5 449,227.5 450,228.5 451,227.5 452,228.5 455,228.5 456,226.5 457,228.5 460,231.5 461,229.5 463,229.5 464,228.5 465,229.5 467,229.5 468,228.5 471,228.5 472,229.5 473,228.5 474,228.5 475,229.5 476,228.5 477,230.5 478,229.5 479,229.5 480,228.5 481,229.5 482,228.5 483,229.5 485,227.5 486,229.5 487,227.5 490,227.5 491,228.5 492,227.5 493,228.5 494,227.5 495,227.5 496,229.5 499,229.5 500,227.5 501,228.5 503,226.5 504,227.5 505,227.5 506,228.5 507,228.5 508,229.5 510,229.5 512,227.5 513,227.5 514,226.5 515,227.5 516,226.5 518,226.5 519,228.5 521,228.5 522,226.5 523,226.5 524,225.5 525,226.5 529,226.5 530,225.5 531,227.5 534,227.5 536,225.5 537,226.5 538,226.5 539,225.5 540,226.5 542,226.5 543,225.5 544,226.5 545,224.5 546,227.5 547,224.5 548,225.5 549,225.5 550,226.5 551,225.5 552,225.5 553,226.5 554,226.5 555,225.5 556,225.5 558,227.5 559,226.5 560,226.5 561,225.5 562,225.5 563,224.5 565,226.5 566,226.5 567,225.5 568,226.5 569,226.5 570,227.5 571,226.5 572,227.5 573,226.5 574,227.5 575,225.5 576,227.5 577,227.5 578,225.5 579,224.5 581,224.5 583,226.5 584,225.5 585,225.5 586,226.5 587,226.5 588,225.5 589,226.5 590,225.5 591,223.5 593,223.5 594,224.5 595,227.5 596,225.5 597,225.5 598,223.5 599,223.5 601,225.5 602,224.5 603,222.5 605,220.5 606,220.5 607,221.5 608,221.5 610,223.5 611,223.5 612,225.5 613,224.5 618,224.5 619,225.5 620,224.5 621,226.5 622,226.5 623,228.5 624,229.5 625,228.5 626,229.5 627,227.5 629,227.5 630,226.5 631,226.5 632,224.5 633,225.5 634,227.5 635,227.5 636,225.5 637,225.5 638,227.5 639,225.5 641,227.5 642,226.5 643,226.5 644,227.5 646,225.5 650,225.5 651,226.5 652,226.5 653,227.5 654,226.5 659,226.5 660,225.5 661,225.5 662,226.5 663,225.5 664,225.5 666,223.5 667,223.5 668,224.5 669,222.5 670,224.5 671,223.5 672,224.5 673,223.5 674,224.5 675,223.5 677,223.5 678,222.5 681,222.5 682,223.5 683,223.5 684,222.5 685,224.5 686,223.5 687,223.5 688,224.5 689,224.5 690,225.5 691,228.5 692,230.5 693,233.5 694,232.5 695,229.5 696,227.5 698,225.5 699,225.5 700,224.5 701,224.5 703,222.5 705,222.5 706,221.5 707,221.5 709,223.5 710,222.5 712,228.5 714,228.5 715,229.5 716,227.5 717,227.5 718,226.5 719,226.5 720,225.5 721,225.5 722,223.5 723,226.5 724,224.5 726,226.5 730,226.5 731,227.5 734,227.5 735,226.5 736,227.5 737,225.5 738,226.5 739,224.5 740,223.5 741,225.5 742,226.5 745.5,233.5 746,232.5 747,231.5 748,229.5 749,228.5 750,226.5 752,224.5 753,222.5 753.3,222.5 754,224.5 755,226.5 757,232.5 757.8,234.5 758,237.5 758.9,250.5 759,248.5 760,230.5 761,211.5 761.1,210.5 762,208.5 763,207.5 763.3,207.5 764,208.5 768,212.5 768.9,214.5 769,213.5 772,213.5 773,212.5 774,212.5 775,213.5 778,213.5 779,214.5 780,214.5 782,220.5 783,220.5 786,217.5 786.7,217.5 787,218.5 789,226.5 789.3,228.5 790,228.5 791,227.5 792,227.5 793,225.5 794,224.5 795,222.5 796,221.5 797,219.5 797.3,219.5 798,220.5 804,226.5 805,228.5 806,229.5 806.7,230.5 807,229.5 809,227.5 810,225.5 811,224.5 811.5,223.5 812,224.5 814,226.5 815,228.5 815.1,228.5 816,226.5 817,225.5 818,223.5 819,222.5 820,220.5 821,219.5 821.1,218.5 828.4,218.5 829,241.5 829.5,261.5 830,247.5 831,221.5 831.1,218.5 832,211.5 832.9,203.5 833,203.5 834,202.5 835,200.5 835.1,200.5 836.7,216.5 837,213.5 837.8,203.5 838,203.5 841,200.5 841.1,200.5 842,201.5 843,203.5 844,204.5 845,206.5 847,208.5 847.8,210.5 848,209.5 849,209.5 850,208.5 851.1,208.5 852,214.5 853,220.5 853.8,226.5 854,225.5 857.3,225.5 858,241.5 858.4,251.5 859,236.5 860,212.5 861,202.5 861.8,195.5 862,196.5 864,204.5 864.4,205.5 865,201.5 866,193.5 866.2,192.5 867,193.5 870,199.5 871,200.5 871.1,201.5 872,202.5 873,203.5 874,205.5 876,207.5 877,209.5 879,211.5 880,213.5 881,220.5 882,228.5 882.2,230.5 883,243.5 883.3,248.5 884,221.5 884.4,205.5 885,200.5 886,191.5 886.7,186.5 887,187.5 888,190.5 888.9,194.5 889,194.5 892,185.5 892.2,184.5 893,187.5 894,190.5 894.4,192.5 895.6,174.5 896,173.5 898,169.5 898.2,169.5 901,183.5 901.1,184.5 902,180.5 903,176.5 904,171.5 905,173.5 908,176.5 908.9,177.5 909,177.5 912,171.5 912.2,171.5 913,174.5 914,177.5 916,185.5 916.7,187.5 917,189.5 920,201.5 921,202.5 922,204.5 922.2,204.5 923,203.5 924,203.5 925,202.5 925.6,202.5 926,205.5 927,215.5 928,224.5 928.4,227.5 929,223.5 930,217.5 931,210.5 931.1,210.5 932,207.5 933,204.5 934,202.5 934.4,201.5 937,214.5 937.3,215.5 938,223.5 939,234.5 939.3,237.5 940,214.5 942,190.5 942.2,187.5 943,184.5 944,180.5 944.4,178.5 945,180.5 946,183.5 946.7,185.5 947,187.5 949,197.5 950,203.5 953,203.5 954,210.5 955,216.5 955.1,216.5 956,214.5 958,210.5 958.9,208.5 960,208.5 961,207.5 961.8,207.5 962,211.5 963,229.5 963.8,244.5 964,236.5 964.9,201.5 965,199.5 966,187.5 967,174.5 967.1,173.5 968,172.5 969,171.5 970,171.5 972,177.5 972.2,177.5 973,168.5 973.3,165.5 973.8,178.5 974,176.5 975,163.5 975.6,155.5 976,152.5 977,146.5 978,143.5 979,138.5 980,131.5 981,126.5 982,120.5 984,112.5 984.4,111.5 985,107.5 986,101.5 987,96.5 988,90.5 989,86.5 990,83.5 991,78.5 991.1,77.5 992,75.5 993,75.5 994,72.5 995,70.5 995.6,69.5 996,69.5 997,68.5 998,66.5 999,62.5 1000,62.5 1001,61.5 1001.1,59.5 1002,60.5 1004,64.5 1004.4,65.5 1005,67.5 1006,70.5 1007,74.5 1007.8,76.5 1008,77.5 1009,83.5 1011,93.5 1011.1,94.5 1012,100.5 1013,107.5 1014,113.5 1014.4,116.5 1015,120.5 1016,127.5 1017,133.5 1017.8,138.5 1018,140.5 1022,164.5 1023,169.5 1024,175.5 1025,180.5 1026,186.5 1026.7,190.5 1027,191.5 1031,207.5 1031.1,207.5 1032,210.5 1033,212.5 1034,215.5 1035,217.5 1036,220.5 1036.7,222.5 1037,222.5 1039,226.5 1040,227.5 1042,231.5 1043,232.5 1043.3,233.5 1044,234.5 1051,241.5 1052,241.5 1053,242.5 1054,242.5 1055,243.5 1056,243.5 1057,244.5 1058,244.5 1059,245.5 1061,245.5 1062,246.5 1065,246.5 1066,247.5 1070,247.5 1071,248.5 1077,248.5 1078,249.5 1084,249.5 1084.4,250.5 1102,250.5 1103,251.5 1126,251.5 1127,252.5 1153,252.5 1154,253.5 1201,253.5 1202,254.5 1273,254.5 1274,255.5 1361,255.5 1362,256.5 1450,256.5 1451,257.5 1538,257.5 1539,258.5 1627,258.5 1628,259.5 1715,259.5 1716,260.5 1751,260.5"/>
</g>
<rect x="3" y="289" width="1748" height="2" fill="#828282"/>
<rect x="3" y="523" width="1748" height="2" fill="#828282"/>
<rect x="3" y="757" width="1748" height="2" fill="#828282"/>
<path d="M1710 64 L1741 64 Q1744.5 64 1744.5 67.5 L1744.5 98 Z" fill="#4d4d4d"/>
<circle cx="1737.2" cy="70.3" r="4.1" fill="#565656" stroke="#a4a4a4" stroke-width="1.3"/>
<line x1="1733.6" y1="74.2" x2="1728.2" y2="79.4" stroke="#a4a4a4" stroke-width="2.2" stroke-linecap="round"/>
<path d="M45 57 L65.5 57 L55.3 66 Z" fill="#f7941d"/>
<path d="M46 68 H64.5 V87.3 H58.6 L55.3 93.8 L52 87.3 H46 Z" fill="#000" stroke="#f7941d" stroke-width="1.8"/>
<text x="55.3" y="83" font-family="DejaVu Sans, Liberation Sans, sans-serif" font-size="13.5" font-weight="bold" text-anchor="middle" fill="#f7941d">T</text>
<path d="M593 36.5 H586.5 V52.5 H593" fill="none" stroke="#e6e6e6" stroke-width="1"/>
<path d="M1161 36.5 H1167.5 V52.5 H1161" fill="none" stroke="#e6e6e6" stroke-width="1"/>
<rect x="587" y="44" width="580" height="2" fill="#b4b4b4"/>
<path d="M596 33 L611 33 L603.5 38.5 Z" fill="#f7941d"/>
<path d="M597 40.5 H610 V52.2 H606 L603.5 56 L601 52.2 H597 Z" fill="#000" stroke="#f7941d" stroke-width="1.3"/>
<text x="603.5" y="50.6" font-family="DejaVu Sans, Liberation Sans, sans-serif" font-size="9.5" font-weight="bold" text-anchor="middle" fill="#f7941d">T</text>
<path d="M9.5 160.5 H29 L41.7 173.0 L29 185.5 H9.5 Q6.5 185.5 6.5 182.5 V163.5 Q6.5 160.5 9.5 160.5 Z" fill="#1c1a08" stroke="#f6ee27" stroke-width="1.2"/>
<text y="177.3" font-family="DejaVu Sans, Liberation Sans, sans-serif" font-size="11.2" fill="#f6ee27" stroke="#f6ee27" stroke-width="0.12"><tspan x="14.5">C</tspan><tspan x="26">1</tspan></text>
<path d="M9.5 394.5 H29 L41.7 407.0 L29 419.5 H9.5 Q6.5 419.5 6.5 416.5 V397.5 Q6.5 394.5 9.5 394.5 Z" fill="#141c08" stroke="#88c82a" stroke-width="1.2"/>
<text y="411.3" font-family="DejaVu Sans, Liberation Sans, sans-serif" font-size="11.2" fill="#88c82a" stroke="#88c82a" stroke-width="0.12"><tspan x="14.5">C</tspan><tspan x="26">4</tspan></text>
<path d="M9.5 721.5 H29 L41.7 734.0 L29 746.5 H9.5 Q6.5 746.5 6.5 743.5 V724.5 Q6.5 721.5 9.5 721.5 Z" fill="#1e1408" stroke="#f7941d" stroke-width="1.2"/>
<text y="738.3" font-family="DejaVu Sans, Liberation Sans, sans-serif" font-size="11.2" fill="#f7941d" stroke="#f7941d" stroke-width="0.12"><tspan x="12.5">M</tspan><tspan x="26">1</tspan></text>
<path d="M10 951.6 H28.6 L40.9 963.8 L28.6 975.9 H10 Q6.9 975.9 6.9 972.9 V954.6 Q6.9 951.6 10 951.6 Z" fill="#6d2d8b"/>
<text y="968.0" font-family="DejaVu Sans, Liberation Sans, sans-serif" font-size="11.2" fill="#ffffff" stroke="#ffffff" stroke-width="0.12"><tspan x="12.5">M</tspan><tspan x="26">2</tspan></text>
<line x1="3" y1="733.5" x2="6" y2="733.5" stroke="#f7941d" stroke-width="1"/>
<line x1="42" y1="733.5" x2="54" y2="733.5" stroke="#f7941d" stroke-width="1"/>
<line x1="42" y1="963.5" x2="54" y2="963.5" stroke="#7f2e98" stroke-width="1"/>
</svg>
<div class="wname" style="top:160.8px;color:#f6ee27">U_loop,coil</div>
<div class="wname" style="top:394.7px;color:#88c82a">U_Photod</div>
<div class="wname" style="top:721.5px;color:#f7941d">B_t</div>
<div class="wname" style="top:951.5px;color:#7f2e98">I_p</div>
<div id="split"></div>
<svg width="1920" height="1080" viewBox="0 0 1920 1080"><g fill="#c2c2c2"><circle cx="1762" cy="503.3" r="2.1"/><circle cx="1762" cy="511.8" r="2.1"/><circle cx="1762" cy="520.3" r="2.1"/></g></svg>
<div id="side"><div class="ttl">Add New...</div>
<div class="btn sbtn" style="left:7px;top:24px;">Cursors</div>
<div class="btn sbtn" style="left:79px;top:24px;">Callout</div>
<div class="btn sbtn" style="left:7px;top:70px;">Measure</div>
<div class="btn sbtn" style="left:79px;top:70px;">Search</div>
<div class="btn sbtn" style="left:7px;top:116px;line-height:16px;padding-top:2px">Results<br>Table</div>
<div class="btn sbtn" style="left:79px;top:116px;letter-spacing:0.55px">Plot</div>
<div class="hr" style="left:3px;top:159px;width:145px"></div>
<div class="btn sbtn" style="left:7px;top:166px;"><svg width="61" height="35" viewBox="0 0 61 35" style="left:0;top:0"><g fill="none" stroke="#c4c4c4" stroke-width="2.3"><line x1="18.2" y1="5.85" x2="41.8" y2="5.85" stroke-dasharray="3 2.8 4.4 3 4.5 2.5 3.4"/><line x1="18.2" y1="24.85" x2="41.8" y2="24.85" stroke-dasharray="3 2.8 4.4 3 4.5 20"/><line x1="19.35" y1="4.7" x2="19.35" y2="26" stroke-dasharray="3.2 2.5 3.3 2.7 3.3 3.2 3.1"/><line x1="40.65" y1="4.7" x2="40.65" y2="26" stroke-dasharray="3.2 2.5 3.3 2.7 3.3 20"/></g><circle cx="32" cy="13.7" r="4.2" fill="none" stroke="#c4c4c4" stroke-width="1.9"/><line x1="28.6" y1="16.3" x2="24.4" y2="19.4" stroke="#c4c4c4" stroke-width="2.6" stroke-linecap="round"/><path d="M35.6 19.5 L38.0 29.3 L40.3 26.4 L42.6 30.3 L44.7 28.6 L42.5 25.1 L45.2 24.6 Z" fill="#c4c4c4" stroke="#2a2a2a" stroke-width="0.5"/></svg></div>
<div class="btn sbtn" style="left:79px;top:166px;letter-spacing:0.5px">More...</div>
<div class="hr" style="left:3px;top:211px;width:145px"></div>
</div>
<div class="abs" style="left:1785px;top:4.3px;width:125px;height:26px;overflow:hidden"><span class="abs" style="left:0.5px;top:-7.5px;font-family:'Liberation Sans',sans-serif;font-weight:bold;font-size:30px;line-height:34px;letter-spacing:-1.85px;color:#fff;-webkit-text-stroke:0.35px #fff;white-space:nowrap">Tektronix</span><svg width="125" height="26" viewBox="0 0 125 26" style="left:0;top:0"><path d="M30.8 21.5 L41.8 5 L46.9 5 L36.6 21.5 Z" fill="#1cb5d8"/></svg></div>
<div class="badge" style="left:3px"><div class="h" style="background:#4a4522;color:#f5ee31">Ch 1</div><div class="hl"></div>
<div class="r" style="top:23px">5 V/div</div>
<div class="r" style="top:43px">1 M&#937;</div>
<div class="r" style="top:61px">200 kHz</div>
<div class="bw">B<i>W</i></div>
</div>
<div class="badge off" style="left:98px"><div class="h" style="background:#25807f;color:#143838">Ch 2</div><div class="hl"></div>
<div class="r" style="top:23px">250 mV/div</div>
<div class="r" style="top:43px">1 M&#937;</div>
<div class="r" style="top:61px">200 kHz</div>
<div class="bw">B<i>W</i></div>
</div>
<div class="badge off" style="left:193px"><div class="h" style="background:#8c3848;color:#c9a2a8">Ch 3</div><div class="hl"></div>
<div class="r" style="top:23px">450 mV/div</div>
<div class="r" style="top:43px">1 M&#937;</div>
<div class="r" style="top:61px">200 kHz</div>
<div class="bw">B<i>W</i></div>
</div>
<div class="badge" style="left:288px"><div class="h" style="background:#384225;color:#8fd128">Ch 4</div><div class="hl"></div>
<div class="r" style="top:23px">200 mV/div</div>
<div class="r" style="top:43px">1 M&#937;</div>
<div class="r" style="top:61px">200 kHz</div>
<div class="bw">B<i>W</i></div>
</div>
<div class="badge" style="left:383px"><div class="h" style="background:#443020;color:#f7941d">Math 1</div><div class="hl"></div>
<div class="r" style="top:23px">72.7621 &#8230;</div>
<div class="r" style="top:43px">Intg(ch2)&#8230;</div>
</div>
<div class="badge" style="left:478px"><div class="h" style="background:#6d2d8b;color:#ffffff">Math 2</div><div class="hl"></div>
<div class="r" style="top:23px">1.1349 k&#8230;</div>
<div class="r" style="top:43px">-intg(ch3&#8230;</div>
</div>
<div class="btn tbtn" style="left:1022px"><div class="bar" style="background:#f7941d"></div>
<div class="num">5</div>
</div>
<div class="btn tbtn" style="left:1067px"><div class="bar" style="background:#2b2bdc"></div>
<div class="num">6</div>
</div>
<div class="vr" style="left:1117px;top:999px;height:78px"></div>
<div class="btn tbtn" style="left:1128px"><div class="bar" style="background:#b5202a"></div>
<div class="tx">Add<br>New<br>Math</div>
</div>
<div class="btn tbtn" style="left:1173px"><div class="bar" style="background:#c8cad8"></div>
<div class="tx">Add<br>New<br>Ref</div>
</div>
<div class="btn tbtn" style="left:1218px"><div class="bar" style="background:#c65cf5"></div>
<div class="tx">Add<br>New<br>Bus</div>
</div>
<div class="vr" style="left:1268px;top:999px;height:78px"></div>
<div class="ibox" style="left:1279px;width:200px"><div class="h">Horizontal</div><div class="hl"></div><div class="r" style="left:6px;top:22px">3 ms/div</div><div class="r" style="left:112px;top:22px">30 ms</div><div class="r" style="left:6px;top:41px">SR: 1 MS/s</div><div class="r" style="left:112px;top:41px">1 &#181;s/pt</div><div class="r" style="left:6px;top:59.7px">RL: 30 kpts</div><div class="r" style="left:126px;top:59.7px">3%</div><svg width="14" height="16" viewBox="0 0 14 16" style="left:111px;top:61px"><path d="M1.6 1.6 H9.6 V9.4 H7.4 L5.6 12.4 L3.8 9.4 H1.6 Z" fill="#000" stroke="#f7941d" stroke-width="1.2"/><text x="5.6" y="8" font-family="DejaVu Sans, sans-serif" font-size="6.5" font-weight="bold" text-anchor="middle" fill="#fff">T</text></svg></div>
<div class="ibox" style="left:1484px;width:160px"><div class="h">Trigger</div><div class="hl"></div><div class="abs" style="left:6px;top:23px;width:30px;height:17px;border:1px solid #000;border-radius:5px;background:#2525c0;color:#fff;font-size:14px;line-height:15px;text-align:center">6</div><svg width="20" height="14" viewBox="0 0 20 14" style="left:45px;top:24px"><path d="M1 11.5 H5 L13.5 2.5 H17.5" fill="none" stroke="#2e2e9a" stroke-width="1"/></svg><div class="r" style="left:72px;top:22px">3 V</div></div>
<div class="ibox" style="left:1649px;width:150px"><div class="h" style="font-size:14.3px">Acquisition</div><div class="hl"></div><div class="r" style="left:6px;top:22px;letter-spacing:0.6px">Manual,</div><div class="r" style="right:5px;top:22px;letter-spacing:0.45px">Analyze</div><div class="r" style="left:6px;top:41px;letter-spacing:0.18px">High Res: 16 bits</div><div class="r" style="left:6px;top:59.7px">Single: 0 /1</div></div>
<div class="vr" style="left:1811px;top:999px;height:78px"></div>
<div class="abs" style="left:1822px;top:998px;width:90px;height:36px;border:1px solid #6a6a6a;border-radius:6px;background:#ff1d25;color:#fff;font-family:'DejaVu Sans Condensed','DejaVu Sans',sans-serif;font-weight:bold;font-size:12.3px;line-height:32px;text-align:center">Preview</div>
<div class="abs" style="left:1822px;top:1042px;width:90px;height:36px;border-radius:4px;background:#c9c9c9;color:#000;font-family:'DejaVu Sans Condensed','DejaVu Sans',sans-serif;font-size:14.8px;line-height:16.5px;text-align:center;padding-top:2px;white-space:nowrap">09 Dec 2024<br>8:11:23 PM</div>
</div></body></html>
